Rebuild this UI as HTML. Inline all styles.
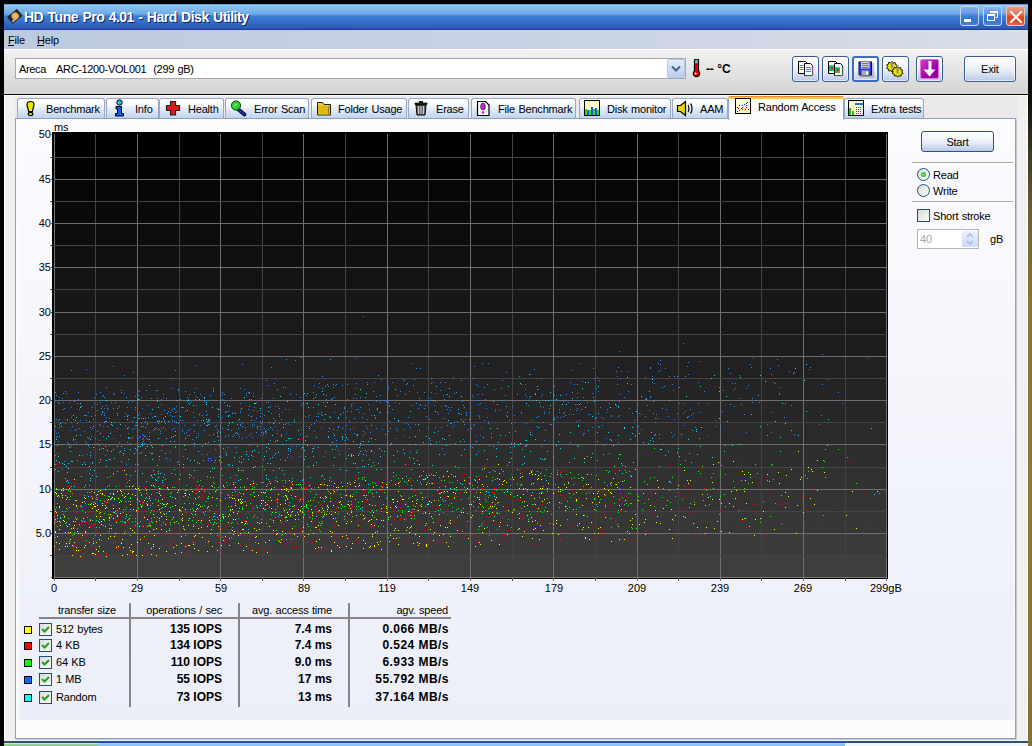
<!DOCTYPE html>
<html><head><meta charset="utf-8">
<style>
*{box-sizing:border-box}
html,body{margin:0;padding:0}
body{width:1032px;height:746px;overflow:hidden;position:relative;background:#000;font-family:"Liberation Sans",sans-serif;font-size:11px;color:#000}
.a{position:absolute}
.t{position:absolute;white-space:pre;line-height:11px;font-size:11px;letter-spacing:-0.2px;word-spacing:0.6px}
/* desktop strip */
#desk{left:1028px;top:0;width:4px;height:746px;background:linear-gradient(#000 0px,#0c0f0a 100px,#3a3420 150px,#6c5c30 210px,#8a7434 300px,#8c7838 500px,#86703a 746px)}
/* window */
#win{left:4px;top:4px;width:1024px;height:738px;background:#f0f0f0}
#title{left:4px;top:4px;width:1024px;height:26px;background:linear-gradient(#3060c0 0px,#a6d6fa 1px,#8ac4f0 2px,#7ab4ea 7px,#6ea6e6 10px,#5a96de 11px,#3a7ed2 12px,#3676cc 16px,#2e60ba 22px,#2c56b0 25px,#1c3c98 25px,#1c3c98 26px)}
#ttext{left:24px;top:10px;font-size:14px;line-height:14px;font-weight:bold;color:#fff;letter-spacing:-0.5px;word-spacing:1px;text-shadow:1px 1px 0 #0a2068}
#menu{left:4px;top:30px;width:1024px;height:19px;background:linear-gradient(90deg,#bccadf,#c8d2e4 50%,#d8dee8)}
#tool{left:4px;top:49px;width:1024px;height:45px;background:linear-gradient(#ffffff 0px,#ffffff 1px,#f2f2f2 1px,#d4d4d4 45px)}
#blk{left:4px;top:94px;width:1024px;height:1px;background:#0a0a0a}
#wht{left:4px;top:95px;width:1024px;height:1px;background:#fbfbfb}
#tabbg{left:15px;top:96px;width:1003px;height:23px;background:#ece9ed}
.tbtn{width:20px;height:20px;border:1px solid #fff;border-radius:3px}
/* combo */
#combo{left:15px;top:58px;width:671px;height:21px;border:1px solid #a7a6aa;background:#fff}
#cbtn{left:667px;top:59px;width:18px;height:19px;border:1px solid #b8c8e4;border-radius:2px;background:linear-gradient(#e4ecfa,#b8cef0)}
/* toolbar buttons */
.tb{width:27px;height:26px;border:1px solid #3c5c98;border-radius:3px;background:linear-gradient(#ffffff 0px,#f6f8fc 30%,#e4eaf6 60%,#b8c8e6 100%);box-shadow:inset 0 0 0 1px rgba(255,255,255,0.6)}
/* tabs */
.tab{top:98px;height:21px;border:1px solid #97a8c2;border-bottom:none;border-radius:3px 3px 0 0;background:linear-gradient(#ffffff 0px,#fdfeff 5px,#e6eefa 9px,#c8d9f2 17px,#bccfea 20px)}
.tabl{position:absolute;top:5px;white-space:pre;line-height:11px;font-size:11px;letter-spacing:-0.2px;word-spacing:0.6px}
/* panel */
#panel{left:15px;top:118px;width:1001px;height:621px;border:1px solid #8ca2be;background:#fbfbfe;box-shadow:1px 1px 0 #c8c8d0}
#pgrad{left:19px;top:122px;width:995px;height:598px;background:linear-gradient(#fbfbfe 0px,#f5f6fc 250px,#eceef8 598px)}
/* chart */
#chart{left:52px;top:132px;width:836px;height:447px;background:#000}
#plot{left:54px;top:134px;width:833px;height:444px;background:linear-gradient(#000 0px,#0a0a0a 90px,#1a1a1a 200px,#2c2c2c 320px,#3c3c3c 444px)}
.gv{position:absolute;top:134px;width:1px;height:444px}
.gh{position:absolute;left:54px;width:833px;height:1px}
.tk{position:absolute;height:1px;background:#555}
.yl{position:absolute;left:11px;width:40px;text-align:right;font-size:11px;line-height:11px;white-space:pre}
.xl{position:absolute;top:583px;font-size:11px;line-height:11px;white-space:pre}
.dots{position:absolute;left:0;top:0}
.btn{border:1px solid #31508c;border-radius:3px;background:linear-gradient(#ffffff 0px,#f6f8fc 30%,#e4eaf6 60%,#b8c8e6 100%)}
.radio{width:13px;height:13px;border:1px solid #1c5180;border-radius:50%;background:linear-gradient(135deg,#dcdcd6,#fafaf8)}
.cb{width:13px;height:13px;border:1px solid #1c5180;background:linear-gradient(135deg,#dcdcd6,#fafaf8)}
.tb12{position:absolute;width:100px;text-align:right;font-size:12px;line-height:12px;font-weight:bold;white-space:pre}
</style></head><body>
<div id="desk" class="a"></div>
<div id="win" class="a"></div>
<div id="title" class="a"></div>
<div id="ttext" class="a">HD Tune Pro 4.01 - Hard Disk Utility</div>

<!-- title buttons -->
<div class="a" style="left:960px;top:6px;width:19px;height:20px;border:1px solid #c2d6f6;border-radius:3px;background:linear-gradient(#86b2ee 0px,#6a9ce6 6px,#3f7cd8 9px,#3a74d4 14px,#4c88dc 20px)"></div>
<div class="a" style="left:964px;top:19px;width:7px;height:3px;background:#fff"></div>
<div class="a" style="left:983px;top:6px;width:19px;height:20px;border:1px solid #c2d6f6;border-radius:3px;background:linear-gradient(#86b2ee 0px,#6a9ce6 6px,#3f7cd8 9px,#3a74d4 14px,#4c88dc 20px)"></div>
<svg class="a" style="left:983px;top:6px" width="20" height="21"><path d="M7.5 5.5h7v6h-2" fill="none" stroke="#fff" stroke-width="1"/><path d="M7 5h8v2H7z" fill="#fff"/><rect x="4.5" y="8.5" width="7" height="6" fill="none" stroke="#fff"/><rect x="4" y="8" width="8" height="2" fill="#fff"/></svg>
<div class="a" style="left:1006px;top:6px;width:19px;height:20px;border:1px solid #f0c4b4;border-radius:3px;background:linear-gradient(#ea9a80 0px,#e27a5c 7px,#d84a24 10px,#dc4e26 15px,#e8805c 20px)"></div>
<svg class="a" style="left:1006px;top:6px" width="20" height="21"><path d="M5 6L15 16M15 6L5 16" stroke="#fff" stroke-width="2" stroke-linecap="square"/></svg>
<!-- title icon -->
<svg class="a" style="left:6px;top:8px" width="17" height="16"><g transform="rotate(-40 8.5 8)"><rect x="2" y="4" width="13" height="9" rx="1" fill="#2a2a2a"/><circle cx="9" cy="8.5" r="3.6" fill="#e8b050"/><circle cx="9" cy="8.5" r="1.2" fill="#c8c8c8"/><rect x="3" y="10" width="5" height="2" fill="#b0b0b0"/></g></svg>
<div id="menu" class="a"></div>
<div class="t" style="left:8px;top:35px">File</div>
<div class="t" style="left:37px;top:35px">Help</div>
<div class="a" style="left:8px;top:45px;width:6px;height:1px;background:#000"></div>
<div class="a" style="left:37px;top:45px;width:7px;height:1px;background:#000"></div>
<div id="tool" class="a"></div>
<div id="blk" class="a"></div>
<div id="wht" class="a"></div>
<div id="tabbg" class="a"></div>

<!-- combo -->
<div id="combo" class="a"></div>
<div class="t" style="left:19px;top:64px;letter-spacing:-0.35px;word-spacing:0.85px">Areca   ARC-1200-VOL001  (299 gB)</div>
<div id="cbtn" class="a"></div>
<svg class="a" style="left:667px;top:59px" width="18" height="19"><path d="M5 7.5l4 4 4-4" fill="none" stroke="#4d6185" stroke-width="2"/></svg>

<!-- toolbar buttons -->
<div class="a tb" style="left:792px;top:56px"></div>
<div class="a tb" style="left:822px;top:56px"></div>
<div class="a tb" style="left:852px;top:56px;border:2px solid #3c6cc8"></div>
<div class="a tb" style="left:882px;top:56px"></div>
<div class="a tb" style="left:916px;top:56px"></div>
<div class="a tb" style="left:964px;top:56px;width:52px"></div>
<div class="t" style="left:981px;top:64px">Exit</div>
<!-- icon 1 copy docs -->
<svg class="a" style="left:797px;top:60px" width="18" height="17">
 <path d="M1.5 1.5h7l2 2v10h-9z" fill="#fff" stroke="#000"/>
 <path d="M2.5 5.5h4M2.5 7.5h4M2.5 9.5h4" stroke="#1e8cff" stroke-width="1.2"/>
 <path d="M7.5 3.5h6l2 2v10h-8z" fill="#f4f4f0" stroke="#000"/>
 <path d="M9 7.5h5M9 9.5h5M9 11.5h5" stroke="#1e8cff" stroke-width="1.2"/>
 <path d="M16 6v10h-8" stroke="#b0b0b0" fill="none"/>
</svg>
<!-- icon 2 copy pics -->
<svg class="a" style="left:827px;top:60px" width="18" height="17">
 <path d="M1.5 1.5h7l2 2v10h-9z" fill="#fff" stroke="#000"/>
 <rect x="2" y="5" width="5" height="6" fill="#22c030"/><rect x="2" y="5" width="5" height="1" fill="#20d0ff"/><rect x="4" y="7" width="2" height="2" fill="#e02020"/>
 <path d="M7.5 3.5h6l2 2v10h-8z" fill="#f4f4f0" stroke="#000"/>
 <rect x="8" y="7" width="5" height="6" fill="#22c030"/><rect x="8" y="7" width="5" height="1" fill="#20d0ff"/><rect x="10" y="9" width="2" height="2" fill="#e02020"/>
 <path d="M16 6v10h-8" stroke="#b0b0b0" fill="none"/>
</svg>
<!-- icon 3 floppy -->
<svg class="a" style="left:858px;top:61px" width="16" height="16">
 <path d="M0.5 0.5h13.5v14h-12.5l-1-1z" fill="#101010"/>
 <rect x="1.5" y="1.5" width="11.5" height="12" fill="#2a3ef0"/>
 <rect x="3" y="1" width="8.5" height="6.5" fill="#d0d0d0"/>
 <path d="M4 2.5h6.5M4 4.5h6.5M4 6.5h6.5" stroke="#7a7a7a" stroke-width="1"/>
 <rect x="3.5" y="9.5" width="7.5" height="4.5" fill="#a8a8a8"/><rect x="8" y="10.5" width="2" height="3" fill="#fff"/>
 <path d="M15 2v13.5h-13" stroke="#9a9a9a" fill="none"/>
</svg>
<!-- icon 4 gears -->
<svg class="a" style="left:886px;top:60px" width="19" height="18">
 <g fill="#e8e000" stroke="#202000" stroke-width="1">
 <path d="M6 1.5l1.2 1.6 1.9-0.6 0.3 2 1.9 0.7-0.9 1.8 1.2 1.6-1.9 0.7-0.3 2-1.9-0.6-1.5 1.4-1.2-1.6-1.9 0.6-0.3-2-1.9-0.7 0.9-1.8-1.2-1.6 1.9-0.7 0.3-2 1.9 0.6z"/>
 <path d="M11.5 6.5l1.2 1.6 1.9-0.6 0.3 2 1.9 0.7-0.9 1.8 1.2 1.6-1.9 0.7-0.3 2-1.9-0.6-1.5 1.4-1.2-1.6-1.9 0.6-0.3-2-1.9-0.7 0.9-1.8-1.2-1.6 1.9-0.7 0.3-2 1.9 0.6z"/>
 </g>
 <rect x="5" y="1" width="2" height="7" fill="#8a8a8a"/><rect x="10.5" y="5" width="2" height="8" fill="#8a8a8a"/>
</svg>
<!-- icon 5 down arrow -->
<div class="a" style="left:920px;top:59px;width:19px;height:20px;border-radius:2px;border:1px solid #e070e0;background:linear-gradient(135deg,#d040d0,#a000a8 60%,#880090)"></div>
<svg class="a" style="left:920px;top:59px" width="19" height="20"><path d="M8.5 2h3v9h-3z" fill="#fff"/><path d="M3.5 10.5h12l-6 7z" fill="#fff"/></svg>
<!-- thermometer -->
<svg class="a" style="left:692px;top:59px" width="10" height="19">
 <path d="M2.5 1.5a2 2 0 0 1 4 0v10.5a3.2 3.2 0 1 1 -4 0z" fill="#e00000" stroke="#000" stroke-width="1.2"/>
 <rect x="3.1" y="1.2" width="2.8" height="3" fill="#30d0e8"/>
 <circle cx="3.6" cy="14.6" r="1" fill="#fff"/>
</svg>
<div class="t" style="left:706px;top:63px;font-weight:bold;font-size:12px;line-height:12px">-- °C</div>
<!-- tabs -->
<div class="a tab" style="left:17px;width:88px"><span class="tabl" style="left:28px">Benchmark</span></div>
<div class="a tab" style="left:106px;width:53px"><span class="tabl" style="left:28px">Info</span></div>
<div class="a tab" style="left:159px;width:65px"><span class="tabl" style="left:28px">Health</span></div>
<div class="a tab" style="left:225px;width:84px"><span class="tabl" style="left:28px">Error Scan</span></div>
<div class="a tab" style="left:311px;width:96px"><span class="tabl" style="left:26px">Folder Usage</span></div>
<div class="a tab" style="left:408px;width:61px"><span class="tabl" style="left:27px">Erase</span></div>
<div class="a tab" style="left:471px;width:105px"><span class="tabl" style="left:26px">File Benchmark</span></div>
<div class="a tab" style="left:579px;width:92px"><span class="tabl" style="left:27px">Disk monitor</span></div>
<div class="a tab" style="left:672px;width:56px"><span class="tabl" style="left:27px">AAM</span></div>
<div class="a tab" style="left:844px;width:80px"><span class="tabl" style="left:26px">Extra tests</span></div>
<!-- tab icons -->
<svg class="a" style="left:26px;top:100px" width="10" height="17"><path d="M4.5 1.5c2 0 3.5 1 3.5 3 0 2-1.3 4.5-1.6 7h-3.8c-0.3-2.5-1.6-5-1.6-7 0-2 1.5-3 3.5-3z" fill="#e8e800" stroke="#000" stroke-width="1.2"/><ellipse cx="4.5" cy="14" rx="2.3" ry="1.6" fill="#e8e800" stroke="#000" stroke-width="1.2"/></svg>
<svg class="a" style="left:114px;top:99px" width="12" height="18"><circle cx="5.5" cy="3.5" r="2.7" fill="#30b4ff" stroke="#000" stroke-width="1"/><path d="M2 7.5h5.5v7h2v2.5h-8v-2.5h2v-4.5h-1.5z" fill="#0a5cf0" stroke="#000" stroke-width="1"/></svg>
<svg class="a" style="left:165px;top:100px" width="17" height="17"><path d="M5.5 1.5h5v4h4v5h-4v4.5h-5v-4.5h-4v-5h4z" fill="#e01818" stroke="#202020" stroke-width="1.2"/></svg>
<svg class="a" style="left:230px;top:100px" width="18" height="17"><path d="M8.5 9.5l6 5" stroke="#000" stroke-width="3.6" stroke-linecap="round"/><path d="M8.5 9.5l6 5" stroke="#2030c0" stroke-width="2" stroke-linecap="round"/><circle cx="6" cy="5.5" r="4.6" fill="#30d030" stroke="#104010" stroke-width="1"/><path d="M4 6.5l3-3" stroke="#c0ffc0" stroke-width="1"/></svg>
<svg class="a" style="left:316px;top:100px" width="16" height="17"><path d="M1.5 2.5h5l1.5 2h6.5v10.5h-13z" fill="#f0d040" stroke="#202000" stroke-width="1"/><path d="M2 5.5h12v9h-12z" fill="#e0b818"/><path d="M12.5 6v8.5" stroke="#a08000"/></svg>
<svg class="a" style="left:414px;top:100px" width="14" height="17"><path d="M1 3h12v1.5h-12z" fill="#303030" stroke="#000" stroke-width="0.8"/><path d="M2 5h10l-1 10h-8z" fill="#6a6a6a" stroke="#000" stroke-width="1"/><path d="M4.5 6v8M7 6v8M9.5 6v8" stroke="#d0d0d0" stroke-width="1"/><rect x="5" y="1" width="4" height="2" fill="#202020"/></svg>
<svg class="a" style="left:476px;top:100px" width="15" height="17"><path d="M1.5 1.5h8l3.5 3.5v10.5h-11.5z" fill="#fafaf0" stroke="#000" stroke-width="1.2"/><ellipse cx="7" cy="6.5" rx="2.3" ry="3.5" fill="#d020e0" stroke="#303030" stroke-width="0.8"/><circle cx="7" cy="12.5" r="1.3" fill="#d020e0"/></svg>
<svg class="a" style="left:584px;top:100px" width="16" height="16"><rect x="0.5" y="0.5" width="15" height="15" fill="#fcfcc8" stroke="#000"/><path d="M1 9h2v6h-2zM5 10h2v5h-2zM9 9h2v6h-2zM13 10h2v5h-2z" fill="#20e020"/><path d="M3 10h2v5h-2zM7 7h2v8h-2zM11 8h2v7h-2z" fill="#3050e0"/></svg>
<svg class="a" style="left:676px;top:100px" width="18" height="17"><path d="M1.5 5.5h3l5-4v14l-5-4h-3z" fill="#e8d800" stroke="#000" stroke-width="1.2"/><path d="M12 5c1.2 1 1.2 6 0 7M14.5 3.5c2 2 2 8 0 10" fill="none" stroke="#000" stroke-width="1.2"/></svg>

<svg class="a" style="left:848px;top:100px" width="17" height="17"><rect x="0.5" y="0.5" width="15" height="15" fill="#fcfcc8" stroke="#000"/><path d="M1 8h2v7h-2zM4 11h2v4h-2z" fill="#20c020"/><rect x="7" y="6" width="8" height="9" fill="#fff"/><path d="M8 7h1v1h-1zM10 7h1v1h-1zM12 7h1v1h-1zM8 9h1v1h-1zM10 9h1v1h-1zM12 9h1v1h-1zM8 11h1v1h-1zM10 11h1v1h-1zM12 11h1v1h-1zM8 13h1v1h-1zM10 13h1v1h-1zM12 13h1v1h-1z" fill="#e02020"/><rect x="7" y="3" width="8" height="2" fill="#3070e0"/></svg>

<!-- panel -->
<div id="panel" class="a"></div>
<div id="pgrad" class="a"></div>

<!-- selected tab -->
<div class="a" style="left:728px;top:96px;width:116px;height:24px;border:1px solid #97a8c2;border-bottom:none;border-top:none;border-radius:3px 3px 0 0;background:#fbfbfe"></div>
<div class="a" style="left:728px;top:96px;width:116px;height:3px;border-radius:3px 3px 0 0;background:linear-gradient(#e68b2c 0px,#e68b2c 1px,#ffc73c 1px)"></div>
<div class="t" style="left:758px;top:102px">Random Access</div>
<svg class="a" style="left:735px;top:98px" width="17" height="17"><defs><linearGradient id="ig" x1="0" y1="0" x2="1" y2="1"><stop offset="0" stop-color="#ffffff"/><stop offset="1" stop-color="#f8f0a0"/></linearGradient></defs><rect x="0.5" y="0.5" width="15" height="15" fill="url(#ig)" stroke="#000"/><path fill="#f00000" d="M2 13h1v1h-1zM3 10h1v1h-1zM7 11h1v1h-1zM7 9h1v1h-1zM10 11h1v1h-1zM11 9h1v1h-1zM13 11h1v1h-1zM4 12h1v1h-1z"/><path fill="#0020ff" d="M2 9h1v1h-1zM4 7h1v1h-1zM6 10h1v1h-1zM7 7h1v1h-1zM9 6h1v1h-1zM11 5h1v1h-1zM11 7h1v1h-1zM12 4h1v1h-1z"/></svg>

<!-- chart -->
<div id="chart" class="a"></div>
<div id="plot" class="a"></div>
<div class="a" style="left:52px;top:578px;width:836px;height:1px;background:#000"></div>
<div class="a" style="left:54px;top:555px;width:833px;height:23px;background:rgb(62,62,62)"></div>
<div class="a" style="left:54px;top:533px;width:833px;height:23px;background:rgb(59,59,59)"></div>
<div class="a" style="left:54px;top:511px;width:833px;height:23px;background:rgb(55,55,55)"></div>
<div class="a" style="left:54px;top:489px;width:833px;height:23px;background:rgb(52,52,52)"></div>
<div class="a" style="left:54px;top:467px;width:833px;height:23px;background:rgb(49,49,49)"></div>
<div class="a" style="left:54px;top:444px;width:833px;height:24px;background:rgb(46,46,46)"></div>
<div class="a" style="left:54px;top:422px;width:833px;height:23px;background:rgb(42,42,42)"></div>
<div class="a" style="left:54px;top:400px;width:833px;height:23px;background:rgb(39,39,39)"></div>
<div class="a" style="left:54px;top:378px;width:833px;height:23px;background:rgb(36,36,36)"></div>
<div class="a" style="left:54px;top:356px;width:833px;height:23px;background:rgb(33,33,33)"></div>
<div class="a" style="left:54px;top:334px;width:833px;height:23px;background:rgb(29,29,29)"></div>
<div class="a" style="left:54px;top:312px;width:833px;height:23px;background:rgb(26,26,26)"></div>
<div class="a" style="left:54px;top:289px;width:833px;height:24px;background:rgb(23,23,23)"></div>
<div class="a" style="left:54px;top:267px;width:833px;height:23px;background:rgb(20,20,20)"></div>
<div class="a" style="left:54px;top:245px;width:833px;height:23px;background:rgb(16,16,16)"></div>
<div class="a" style="left:54px;top:223px;width:833px;height:23px;background:rgb(13,13,13)"></div>
<div class="a" style="left:54px;top:201px;width:833px;height:23px;background:rgb(10,10,10)"></div>
<div class="a" style="left:54px;top:179px;width:833px;height:23px;background:rgb(7,7,7)"></div>
<div class="a" style="left:54px;top:157px;width:833px;height:23px;background:rgb(3,3,3)"></div>
<div class="a" style="left:54px;top:134px;width:833px;height:24px;background:rgb(0,0,0)"></div>
<div class="gv" style="left:54px;background:#6e6e6e"></div>
<div class="gv" style="left:95px;background:#424242"></div>
<div class="gv" style="left:137px;background:#6e6e6e"></div>
<div class="gv" style="left:179px;background:#424242"></div>
<div class="gv" style="left:220px;background:#6e6e6e"></div>
<div class="gv" style="left:262px;background:#424242"></div>
<div class="gv" style="left:303px;background:#6e6e6e"></div>
<div class="gv" style="left:345px;background:#424242"></div>
<div class="gv" style="left:387px;background:#6e6e6e"></div>
<div class="gv" style="left:428px;background:#424242"></div>
<div class="gv" style="left:470px;background:#6e6e6e"></div>
<div class="gv" style="left:512px;background:#424242"></div>
<div class="gv" style="left:553px;background:#6e6e6e"></div>
<div class="gv" style="left:595px;background:#424242"></div>
<div class="gv" style="left:637px;background:#6e6e6e"></div>
<div class="gv" style="left:678px;background:#424242"></div>
<div class="gv" style="left:720px;background:#6e6e6e"></div>
<div class="gv" style="left:761px;background:#424242"></div>
<div class="gv" style="left:803px;background:#6e6e6e"></div>
<div class="gv" style="left:845px;background:#424242"></div>
<div class="gv" style="left:886px;background:#6e6e6e"></div>
<div class="gh" style="top:577px;background:#787878"></div>
<div class="gh" style="top:555px;background:#444444"></div>
<div class="gh" style="top:533px;background:#6e6e6e"></div>
<div class="gh" style="top:511px;background:#444444"></div>
<div class="gh" style="top:489px;background:#6e6e6e"></div>
<div class="gh" style="top:467px;background:#444444"></div>
<div class="gh" style="top:444px;background:#6e6e6e"></div>
<div class="gh" style="top:422px;background:#444444"></div>
<div class="gh" style="top:400px;background:#6e6e6e"></div>
<div class="gh" style="top:378px;background:#444444"></div>
<div class="gh" style="top:356px;background:#6e6e6e"></div>
<div class="gh" style="top:334px;background:#444444"></div>
<div class="gh" style="top:312px;background:#6e6e6e"></div>
<div class="gh" style="top:289px;background:#444444"></div>
<div class="gh" style="top:267px;background:#6e6e6e"></div>
<div class="gh" style="top:245px;background:#444444"></div>
<div class="gh" style="top:223px;background:#6e6e6e"></div>
<div class="gh" style="top:201px;background:#444444"></div>
<div class="gh" style="top:179px;background:#6e6e6e"></div>
<div class="gh" style="top:157px;background:#444444"></div>
<div class="a" style="left:54px;top:578px;width:1px;height:3px;background:#707070"></div>
<div class="a" style="left:95px;top:578px;width:1px;height:3px;background:#555"></div>
<div class="a" style="left:137px;top:578px;width:1px;height:3px;background:#707070"></div>
<div class="a" style="left:179px;top:578px;width:1px;height:3px;background:#555"></div>
<div class="a" style="left:220px;top:578px;width:1px;height:3px;background:#707070"></div>
<div class="a" style="left:262px;top:578px;width:1px;height:3px;background:#555"></div>
<div class="a" style="left:303px;top:578px;width:1px;height:3px;background:#707070"></div>
<div class="a" style="left:345px;top:578px;width:1px;height:3px;background:#555"></div>
<div class="a" style="left:387px;top:578px;width:1px;height:3px;background:#707070"></div>
<div class="a" style="left:428px;top:578px;width:1px;height:3px;background:#555"></div>
<div class="a" style="left:470px;top:578px;width:1px;height:3px;background:#707070"></div>
<div class="a" style="left:512px;top:578px;width:1px;height:3px;background:#555"></div>
<div class="a" style="left:553px;top:578px;width:1px;height:3px;background:#707070"></div>
<div class="a" style="left:595px;top:578px;width:1px;height:3px;background:#555"></div>
<div class="a" style="left:637px;top:578px;width:1px;height:3px;background:#707070"></div>
<div class="a" style="left:678px;top:578px;width:1px;height:3px;background:#555"></div>
<div class="a" style="left:720px;top:578px;width:1px;height:3px;background:#707070"></div>
<div class="a" style="left:761px;top:578px;width:1px;height:3px;background:#555"></div>
<div class="a" style="left:803px;top:578px;width:1px;height:3px;background:#707070"></div>
<div class="a" style="left:845px;top:578px;width:1px;height:3px;background:#555"></div>
<div class="a" style="left:886px;top:578px;width:1px;height:3px;background:#707070"></div>
<div class="tk" style="top:577px;left:51px;width:3px"></div>
<div class="tk" style="top:555px;left:50px;width:4px"></div>
<div class="tk" style="top:533px;left:51px;width:3px"></div>
<div class="tk" style="top:511px;left:50px;width:4px"></div>
<div class="tk" style="top:489px;left:51px;width:3px"></div>
<div class="tk" style="top:467px;left:50px;width:4px"></div>
<div class="tk" style="top:444px;left:51px;width:3px"></div>
<div class="tk" style="top:422px;left:50px;width:4px"></div>
<div class="tk" style="top:400px;left:51px;width:3px"></div>
<div class="tk" style="top:378px;left:50px;width:4px"></div>
<div class="tk" style="top:356px;left:51px;width:3px"></div>
<div class="tk" style="top:334px;left:50px;width:4px"></div>
<div class="tk" style="top:312px;left:51px;width:3px"></div>
<div class="tk" style="top:289px;left:50px;width:4px"></div>
<div class="tk" style="top:267px;left:51px;width:3px"></div>
<div class="tk" style="top:245px;left:50px;width:4px"></div>
<div class="tk" style="top:223px;left:51px;width:3px"></div>
<div class="tk" style="top:201px;left:50px;width:4px"></div>
<div class="tk" style="top:179px;left:51px;width:3px"></div>
<div class="tk" style="top:157px;left:50px;width:4px"></div>
<div class="tk" style="top:134px;left:51px;width:3px"></div>
<svg class="dots" width="1032" height="746" shape-rendering="crispEdges"><path fill="#00e8ff" d="M436 386h1v1h-1zM572 398h1v1h-1zM66 522h1v1h-1zM711 378h1v1h-1zM252 451h1v1h-1zM493 446h1v1h-1zM483 437h1v1h-1zM199 399h1v1h-1zM69 447h1v1h-1zM190 460h1v1h-1zM825 449h1v1h-1zM165 416h1v1h-1zM155 479h1v1h-1zM727 421h1v1h-1zM740 377h1v1h-1zM315 397h1v1h-1zM525 446h1v1h-1zM166 513h1v1h-1zM155 428h1v1h-1zM136 422h1v1h-1zM732 445h1v1h-1zM785 423h1v1h-1zM130 475h1v1h-1zM394 461h1v1h-1zM255 403h1v1h-1zM160 473h1v1h-1zM668 451h1v1h-1zM453 476h1v1h-1zM428 504h1v1h-1zM269 448h1v1h-1zM184 503h1v1h-1zM157 401h1v1h-1zM603 454h1v1h-1zM425 479h1v1h-1zM232 465h1v1h-1zM217 436h1v1h-1zM366 393h1v1h-1zM358 455h1v1h-1zM539 493h1v1h-1zM346 437h1v1h-1zM545 458h1v1h-1zM316 437h1v1h-1zM522 464h1v1h-1zM341 508h1v1h-1zM501 469h1v1h-1zM110 433h1v1h-1zM90 455h1v1h-1zM574 458h1v1h-1zM209 420h1v1h-1zM649 391h1v1h-1zM598 413h1v1h-1zM137 449h1v1h-1zM65 495h1v1h-1zM651 432h1v1h-1zM302 447h1v1h-1zM874 494h1v1h-1zM507 412h1v1h-1zM227 405h1v1h-1zM461 419h1v1h-1zM446 445h1v1h-1zM610 439h1v1h-1zM660 449h1v1h-1zM134 417h1v1h-1zM198 451h1v1h-1zM177 462h1v1h-1zM520 473h1v1h-1zM65 478h1v1h-1zM74 486h1v1h-1zM230 477h1v1h-1zM203 420h1v1h-1zM307 403h1v1h-1zM449 435h1v1h-1zM560 474h1v1h-1zM82 464h1v1h-1zM214 441h1v1h-1zM210 471h1v1h-1zM152 477h1v1h-1zM714 375h1v1h-1zM159 421h1v1h-1zM152 409h1v1h-1zM553 505h1v1h-1zM318 447h1v1h-1zM90 452h1v1h-1zM304 459h1v1h-1zM120 424h1v1h-1zM558 491h1v1h-1zM283 508h1v1h-1zM88 496h1v1h-1zM228 495h1v1h-1zM538 427h1v1h-1zM57 445h1v1h-1zM141 495h1v1h-1zM89 466h1v1h-1zM175 435h1v1h-1zM275 453h1v1h-1zM479 503h1v1h-1zM68 482h1v1h-1zM401 496h1v1h-1zM305 456h1v1h-1zM193 405h1v1h-1zM229 406h1v1h-1zM483 486h1v1h-1zM530 451h1v1h-1zM413 458h1v1h-1zM409 511h1v1h-1zM68 468h1v1h-1zM546 469h1v1h-1zM292 478h1v1h-1zM254 403h1v1h-1zM444 439h1v1h-1zM149 496h1v1h-1zM436 442h1v1h-1zM111 422h1v1h-1zM566 404h1v1h-1zM661 449h1v1h-1zM530 434h1v1h-1zM205 443h1v1h-1zM558 441h1v1h-1zM584 462h1v1h-1zM520 443h1v1h-1zM266 447h1v1h-1zM184 445h1v1h-1zM191 475h1v1h-1zM330 417h1v1h-1zM449 388h1v1h-1zM371 438h1v1h-1zM353 455h1v1h-1zM226 453h1v1h-1zM506 406h1v1h-1zM111 451h1v1h-1zM511 458h1v1h-1zM287 401h1v1h-1zM597 460h1v1h-1zM268 411h1v1h-1zM411 485h1v1h-1zM338 507h1v1h-1zM758 395h1v1h-1zM138 399h1v1h-1zM288 438h1v1h-1zM90 478h1v1h-1zM260 408h1v1h-1zM478 507h1v1h-1zM199 463h1v1h-1zM89 473h1v1h-1zM173 436h1v1h-1zM627 383h1v1h-1zM394 418h1v1h-1zM165 479h1v1h-1zM374 415h1v1h-1zM719 418h1v1h-1zM152 447h1v1h-1zM322 475h1v1h-1zM318 404h1v1h-1zM363 441h1v1h-1zM336 446h1v1h-1zM630 475h1v1h-1zM515 431h1v1h-1zM124 522h1v1h-1zM514 446h1v1h-1zM129 480h1v1h-1zM827 445h1v1h-1zM701 427h1v1h-1zM184 493h1v1h-1zM385 434h1v1h-1zM307 445h1v1h-1zM60 423h1v1h-1zM760 426h1v1h-1zM92 462h1v1h-1zM321 476h1v1h-1zM518 444h1v1h-1zM740 444h1v1h-1zM159 491h1v1h-1zM238 480h1v1h-1zM493 401h1v1h-1zM550 392h1v1h-1zM439 454h1v1h-1zM566 474h1v1h-1zM460 441h1v1h-1zM59 462h1v1h-1zM147 446h1v1h-1zM328 437h1v1h-1zM106 400h1v1h-1zM265 509h1v1h-1zM520 383h1v1h-1zM267 463h1v1h-1zM359 447h1v1h-1zM596 504h1v1h-1zM633 462h1v1h-1zM497 428h1v1h-1zM219 460h1v1h-1zM532 492h1v1h-1zM208 421h1v1h-1zM56 439h1v1h-1zM266 486h1v1h-1zM199 414h1v1h-1zM357 467h1v1h-1zM228 435h1v1h-1zM239 508h1v1h-1zM316 462h1v1h-1zM636 411h1v1h-1zM138 446h1v1h-1zM141 426h1v1h-1zM161 421h1v1h-1zM560 448h1v1h-1zM327 402h1v1h-1zM260 505h1v1h-1zM223 518h1v1h-1zM308 407h1v1h-1zM55 469h1v1h-1zM76 435h1v1h-1zM273 470h1v1h-1zM470 446h1v1h-1zM726 396h1v1h-1zM490 428h1v1h-1zM172 497h1v1h-1zM578 426h1v1h-1zM496 456h1v1h-1zM110 493h1v1h-1zM58 456h1v1h-1zM712 457h1v1h-1zM483 507h1v1h-1zM324 501h1v1h-1zM678 448h1v1h-1zM415 495h1v1h-1zM393 472h1v1h-1zM313 448h1v1h-1zM225 412h1v1h-1zM243 470h1v1h-1zM177 400h1v1h-1zM197 481h1v1h-1zM305 440h1v1h-1zM358 486h1v1h-1zM159 456h1v1h-1zM163 484h1v1h-1zM269 481h1v1h-1zM270 463h1v1h-1zM353 441h1v1h-1zM56 507h1v1h-1zM225 516h1v1h-1zM470 459h1v1h-1zM368 441h1v1h-1zM117 471h1v1h-1zM220 402h1v1h-1zM270 427h1v1h-1zM371 425h1v1h-1zM167 413h1v1h-1zM679 456h1v1h-1zM255 466h1v1h-1zM127 419h1v1h-1zM76 417h1v1h-1zM121 461h1v1h-1zM494 496h1v1h-1zM406 476h1v1h-1zM686 396h1v1h-1zM246 451h1v1h-1zM461 396h1v1h-1zM719 391h1v1h-1zM351 455h1v1h-1zM310 477h1v1h-1zM197 462h1v1h-1zM495 471h1v1h-1zM288 448h1v1h-1zM58 471h1v1h-1zM386 498h1v1h-1zM84 462h1v1h-1zM109 459h1v1h-1zM360 508h1v1h-1zM279 514h1v1h-1zM229 465h1v1h-1zM713 488h1v1h-1zM268 479h1v1h-1zM190 402h1v1h-1zM179 479h1v1h-1zM96 476h1v1h-1zM168 421h1v1h-1zM445 405h1v1h-1zM377 444h1v1h-1zM806 411h1v1h-1zM141 452h1v1h-1zM209 520h1v1h-1zM562 404h1v1h-1zM94 470h1v1h-1zM650 440h1v1h-1zM135 471h1v1h-1zM154 474h1v1h-1zM157 421h1v1h-1zM152 459h1v1h-1zM63 514h1v1h-1zM147 501h1v1h-1zM560 395h1v1h-1zM149 439h1v1h-1zM143 418h1v1h-1zM537 386h1v1h-1zM360 389h1v1h-1zM585 407h1v1h-1zM71 461h1v1h-1zM577 445h1v1h-1zM497 404h1v1h-1zM349 482h1v1h-1zM113 449h1v1h-1zM618 435h1v1h-1zM187 410h1v1h-1zM540 458h1v1h-1zM80 403h1v1h-1zM444 454h1v1h-1zM56 460h1v1h-1zM477 482h1v1h-1zM127 416h1v1h-1zM84 501h1v1h-1zM91 503h1v1h-1zM191 489h1v1h-1zM127 428h1v1h-1zM174 441h1v1h-1zM107 500h1v1h-1zM782 403h1v1h-1zM330 477h1v1h-1zM117 446h1v1h-1zM463 421h1v1h-1zM325 414h1v1h-1zM283 427h1v1h-1zM185 438h1v1h-1zM276 477h1v1h-1zM700 386h1v1h-1zM455 466h1v1h-1zM632 427h1v1h-1zM526 403h1v1h-1zM373 462h1v1h-1zM185 449h1v1h-1zM670 482h1v1h-1zM266 478h1v1h-1zM461 510h1v1h-1zM351 456h1v1h-1zM269 422h1v1h-1zM482 469h1v1h-1zM98 521h1v1h-1zM377 409h1v1h-1zM325 406h1v1h-1zM598 426h1v1h-1zM356 509h1v1h-1zM582 388h1v1h-1zM185 490h1v1h-1zM202 446h1v1h-1zM703 500h1v1h-1zM105 446h1v1h-1zM352 496h1v1h-1zM578 425h1v1h-1zM284 474h1v1h-1zM176 422h1v1h-1zM103 448h1v1h-1zM92 475h1v1h-1zM416 452h1v1h-1zM212 468h1v1h-1zM653 401h1v1h-1zM414 463h1v1h-1zM610 407h1v1h-1zM433 400h1v1h-1zM411 469h1v1h-1zM207 425h1v1h-1zM258 452h1v1h-1zM535 394h1v1h-1zM410 411h1v1h-1zM130 509h1v1h-1zM585 382h1v1h-1zM364 466h1v1h-1zM228 416h1v1h-1zM751 414h1v1h-1zM569 462h1v1h-1zM509 432h1v1h-1zM298 444h1v1h-1zM228 425h1v1h-1zM120 451h1v1h-1zM223 448h1v1h-1zM247 478h1v1h-1zM148 508h1v1h-1zM517 469h1v1h-1zM342 437h1v1h-1zM220 432h1v1h-1zM524 463h1v1h-1zM488 492h1v1h-1zM767 480h1v1h-1zM234 457h1v1h-1zM236 452h1v1h-1zM622 473h1v1h-1zM780 437h1v1h-1zM135 448h1v1h-1zM241 408h1v1h-1zM395 389h1v1h-1zM476 454h1v1h-1zM627 377h1v1h-1zM348 455h1v1h-1zM206 419h1v1h-1zM767 435h1v1h-1zM380 456h1v1h-1zM641 396h1v1h-1zM64 464h1v1h-1zM107 450h1v1h-1zM484 450h1v1h-1zM199 504h1v1h-1zM248 459h1v1h-1zM592 453h1v1h-1zM206 404h1v1h-1zM106 466h1v1h-1zM285 460h1v1h-1zM194 470h1v1h-1zM85 485h1v1h-1zM687 417h1v1h-1zM157 465h1v1h-1zM342 436h1v1h-1zM755 464h1v1h-1zM524 456h1v1h-1zM237 424h1v1h-1zM741 480h1v1h-1zM579 404h1v1h-1zM170 441h1v1h-1zM648 443h1v1h-1zM677 452h1v1h-1zM544 459h1v1h-1zM277 440h1v1h-1zM578 446h1v1h-1zM611 482h1v1h-1zM114 512h1v1h-1zM787 489h1v1h-1zM387 467h1v1h-1zM271 493h1v1h-1zM60 517h1v1h-1zM442 438h1v1h-1zM81 406h1v1h-1zM363 495h1v1h-1zM620 454h1v1h-1zM142 444h1v1h-1zM618 406h1v1h-1zM492 480h1v1h-1zM336 446h1v1h-1zM522 449h1v1h-1zM66 481h1v1h-1zM793 373h1v1h-1zM316 494h1v1h-1zM312 451h1v1h-1zM760 375h1v1h-1zM106 460h1v1h-1zM384 451h1v1h-1zM282 444h1v1h-1zM109 485h1v1h-1zM265 431h1v1h-1zM156 480h1v1h-1zM140 521h1v1h-1zM595 418h1v1h-1zM93 447h1v1h-1zM681 434h1v1h-1zM175 431h1v1h-1zM450 488h1v1h-1zM105 421h1v1h-1zM545 400h1v1h-1zM285 480h1v1h-1zM652 438h1v1h-1zM535 439h1v1h-1zM153 470h1v1h-1zM462 484h1v1h-1zM362 510h1v1h-1zM174 469h1v1h-1zM691 462h1v1h-1zM221 462h1v1h-1zM164 474h1v1h-1zM624 428h1v1h-1zM298 430h1v1h-1zM510 452h1v1h-1zM546 480h1v1h-1zM203 460h1v1h-1zM121 446h1v1h-1zM710 496h1v1h-1zM171 437h1v1h-1zM89 421h1v1h-1zM689 453h1v1h-1zM183 464h1v1h-1zM268 407h1v1h-1zM218 409h1v1h-1zM62 511h1v1h-1zM461 455h1v1h-1zM333 465h1v1h-1zM158 407h1v1h-1zM376 492h1v1h-1zM597 441h1v1h-1zM212 407h1v1h-1zM608 432h1v1h-1zM128 459h1v1h-1zM498 442h1v1h-1zM775 421h1v1h-1zM151 510h1v1h-1zM228 464h1v1h-1zM409 457h1v1h-1zM73 439h1v1h-1zM303 479h1v1h-1zM146 481h1v1h-1zM452 511h1v1h-1zM204 397h1v1h-1zM700 446h1v1h-1zM556 445h1v1h-1zM369 459h1v1h-1zM371 450h1v1h-1zM67 472h1v1h-1zM667 500h1v1h-1zM765 381h1v1h-1zM699 438h1v1h-1zM203 512h1v1h-1zM613 445h1v1h-1zM158 477h1v1h-1zM257 446h1v1h-1zM90 469h1v1h-1zM491 437h1v1h-1zM163 477h1v1h-1zM166 458h1v1h-1zM244 397h1v1h-1zM65 423h1v1h-1zM404 453h1v1h-1zM463 508h1v1h-1zM241 462h1v1h-1zM391 443h1v1h-1zM485 510h1v1h-1zM214 516h1v1h-1zM275 441h1v1h-1zM70 451h1v1h-1zM139 486h1v1h-1zM724 451h1v1h-1zM155 416h1v1h-1zM162 445h1v1h-1zM226 455h1v1h-1zM548 400h1v1h-1zM316 516h1v1h-1zM458 409h1v1h-1zM140 446h1v1h-1zM239 419h1v1h-1zM158 473h1v1h-1zM417 460h1v1h-1zM302 480h1v1h-1zM652 379h1v1h-1zM171 473h1v1h-1zM368 464h1v1h-1zM104 413h1v1h-1zM68 463h1v1h-1zM489 472h1v1h-1zM84 521h1v1h-1zM151 445h1v1h-1zM102 412h1v1h-1zM338 417h1v1h-1zM361 441h1v1h-1zM278 452h1v1h-1zM397 451h1v1h-1zM542 459h1v1h-1zM334 457h1v1h-1zM279 414h1v1h-1zM123 453h1v1h-1zM594 401h1v1h-1zM432 465h1v1h-1zM99 513h1v1h-1zM298 439h1v1h-1zM241 470h1v1h-1zM113 473h1v1h-1zM165 453h1v1h-1zM403 449h1v1h-1zM170 496h1v1h-1zM688 416h1v1h-1zM322 391h1v1h-1zM570 432h1v1h-1zM409 444h1v1h-1zM496 448h1v1h-1zM349 505h1v1h-1zM828 419h1v1h-1zM460 483h1v1h-1zM451 407h1v1h-1zM449 396h1v1h-1zM332 449h1v1h-1zM371 451h1v1h-1zM82 521h1v1h-1zM404 481h1v1h-1zM653 441h1v1h-1zM357 435h1v1h-1zM669 400h1v1h-1zM287 499h1v1h-1zM355 463h1v1h-1zM588 382h1v1h-1zM371 466h1v1h-1zM426 475h1v1h-1zM351 454h1v1h-1zM324 419h1v1h-1zM366 495h1v1h-1zM61 426h1v1h-1zM550 405h1v1h-1zM164 474h1v1h-1zM85 464h1v1h-1zM294 421h1v1h-1zM611 440h1v1h-1zM655 434h1v1h-1zM108 436h1v1h-1zM394 461h1v1h-1zM539 402h1v1h-1zM304 393h1v1h-1zM340 469h1v1h-1zM210 458h1v1h-1zM697 454h1v1h-1zM238 468h1v1h-1zM434 432h1v1h-1zM130 449h1v1h-1zM304 450h1v1h-1zM272 435h1v1h-1zM464 449h1v1h-1zM696 431h1v1h-1zM500 435h1v1h-1zM264 456h1v1h-1zM67 480h1v1h-1zM100 459h1v1h-1zM236 475h1v1h-1zM503 471h1v1h-1zM493 470h1v1h-1zM179 464h1v1h-1zM190 509h1v1h-1zM114 458h1v1h-1zM795 368h1v1h-1zM417 499h1v1h-1zM266 475h1v1h-1zM142 445h1v1h-1zM278 516h1v1h-1zM290 438h1v1h-1zM598 386h1v1h-1zM215 460h1v1h-1zM142 443h1v1h-1zM206 402h1v1h-1zM73 415h1v1h-1zM158 438h1v1h-1zM194 443h1v1h-1zM286 440h1v1h-1zM90 439h1v1h-1zM588 430h1v1h-1zM425 478h1v1h-1zM559 507h1v1h-1zM151 453h1v1h-1zM625 466h1v1h-1zM632 433h1v1h-1zM358 472h1v1h-1zM448 420h1v1h-1zM219 456h1v1h-1zM208 498h1v1h-1zM257 517h1v1h-1zM451 474h1v1h-1zM142 473h1v1h-1zM429 438h1v1h-1zM685 460h1v1h-1zM318 413h1v1h-1zM526 440h1v1h-1zM162 482h1v1h-1zM152 453h1v1h-1zM204 514h1v1h-1zM344 516h1v1h-1zM134 453h1v1h-1zM180 416h1v1h-1zM257 426h1v1h-1zM435 411h1v1h-1zM487 459h1v1h-1zM93 426h1v1h-1zM622 465h1v1h-1zM187 458h1v1h-1zM368 484h1v1h-1zM688 439h1v1h-1zM757 473h1v1h-1zM547 451h1v1h-1zM126 516h1v1h-1zM241 456h1v1h-1zM99 449h1v1h-1zM677 444h1v1h-1zM643 442h1v1h-1zM251 416h1v1h-1zM100 433h1v1h-1zM376 469h1v1h-1zM781 495h1v1h-1zM514 443h1v1h-1zM104 501h1v1h-1zM323 394h1v1h-1zM188 400h1v1h-1zM145 455h1v1h-1zM301 448h1v1h-1zM398 420h1v1h-1zM423 442h1v1h-1zM871 428h1v1h-1zM99 462h1v1h-1zM279 468h1v1h-1zM196 437h1v1h-1zM239 461h1v1h-1zM804 380h1v1h-1zM268 443h1v1h-1zM111 424h1v1h-1zM379 448h1v1h-1zM624 427h1v1h-1zM272 457h1v1h-1zM379 489h1v1h-1zM442 499h1v1h-1zM619 454h1v1h-1zM337 490h1v1h-1zM568 483h1v1h-1zM593 397h1v1h-1zM415 436h1v1h-1zM72 461h1v1h-1zM348 501h1v1h-1zM150 505h1v1h-1zM421 475h1v1h-1zM798 435h1v1h-1zM530 396h1v1h-1zM300 471h1v1h-1zM79 455h1v1h-1zM75 500h1v1h-1zM556 399h1v1h-1zM346 470h1v1h-1zM597 432h1v1h-1zM163 418h1v1h-1zM329 428h1v1h-1zM554 419h1v1h-1zM779 393h1v1h-1zM418 424h1v1h-1zM791 430h1v1h-1zM254 450h1v1h-1zM166 438h1v1h-1zM476 441h1v1h-1zM479 497h1v1h-1zM183 467h1v1h-1zM707 494h1v1h-1zM290 449h1v1h-1zM282 470h1v1h-1zM75 420h1v1h-1zM621 463h1v1h-1zM381 469h1v1h-1zM591 457h1v1h-1zM301 506h1v1h-1zM332 442h1v1h-1zM378 463h1v1h-1zM66 466h1v1h-1zM639 433h1v1h-1zM88 445h1v1h-1zM340 414h1v1h-1zM537 471h1v1h-1zM526 445h1v1h-1zM698 403h1v1h-1zM81 476h1v1h-1zM309 428h1v1h-1zM112 425h1v1h-1zM360 451h1v1h-1zM592 416h1v1h-1zM232 422h1v1h-1zM619 470h1v1h-1zM213 477h1v1h-1zM251 455h1v1h-1zM393 455h1v1h-1zM231 506h1v1h-1zM362 460h1v1h-1zM246 454h1v1h-1zM507 416h1v1h-1zM559 434h1v1h-1zM207 421h1v1h-1zM431 444h1v1h-1zM362 466h1v1h-1zM189 477h1v1h-1zM780 451h1v1h-1zM80 407h1v1h-1zM405 464h1v1h-1zM313 456h1v1h-1zM511 443h1v1h-1zM198 505h1v1h-1zM162 480h1v1h-1zM280 396h1v1h-1zM346 458h1v1h-1zM536 400h1v1h-1zM90 480h1v1h-1zM508 386h1v1h-1zM150 500h1v1h-1zM415 444h1v1h-1zM363 454h1v1h-1zM696 429h1v1h-1zM213 434h1v1h-1zM101 414h1v1h-1zM221 468h1v1h-1zM383 504h1v1h-1zM266 451h1v1h-1zM630 439h1v1h-1zM334 435h1v1h-1zM92 520h1v1h-1zM239 508h1v1h-1zM806 364h1v1h-1zM232 413h1v1h-1zM426 436h1v1h-1zM305 444h1v1h-1zM420 482h1v1h-1zM618 458h1v1h-1zM273 423h1v1h-1zM233 482h1v1h-1zM62 463h1v1h-1zM75 420h1v1h-1zM234 489h1v1h-1zM360 443h1v1h-1zM194 460h1v1h-1zM57 521h1v1h-1zM485 499h1v1h-1zM335 404h1v1h-1zM615 404h1v1h-1z"/><path fill="#1e8cff" d="M323 402h1v1h-1zM499 410h1v1h-1zM85 441h1v1h-1zM157 390h1v1h-1zM534 369h1v1h-1zM174 416h1v1h-1zM204 401h1v1h-1zM509 420h1v1h-1zM619 401h1v1h-1zM431 383h1v1h-1zM257 411h1v1h-1zM660 360h1v1h-1zM180 420h1v1h-1zM536 426h1v1h-1zM448 407h1v1h-1zM375 418h1v1h-1zM194 417h1v1h-1zM161 414h1v1h-1zM121 392h1v1h-1zM285 409h1v1h-1zM200 425h1v1h-1zM544 411h1v1h-1zM361 441h1v1h-1zM482 394h1v1h-1zM380 412h1v1h-1zM106 438h1v1h-1zM337 430h1v1h-1zM138 415h1v1h-1zM564 412h1v1h-1zM357 434h1v1h-1zM441 427h1v1h-1zM339 454h1v1h-1zM73 440h1v1h-1zM505 395h1v1h-1zM271 413h1v1h-1zM328 436h1v1h-1zM242 438h1v1h-1zM77 423h1v1h-1zM237 433h1v1h-1zM124 448h1v1h-1zM202 415h1v1h-1zM656 414h1v1h-1zM175 370h1v1h-1zM345 434h1v1h-1zM741 404h1v1h-1zM254 425h1v1h-1zM163 427h1v1h-1zM471 428h1v1h-1zM420 405h1v1h-1zM197 397h1v1h-1zM325 386h1v1h-1zM142 434h1v1h-1zM563 401h1v1h-1zM430 400h1v1h-1zM752 398h1v1h-1zM114 422h1v1h-1zM182 407h1v1h-1zM385 356h1v1h-1zM188 430h1v1h-1zM217 408h1v1h-1zM514 415h1v1h-1zM141 418h1v1h-1zM279 408h1v1h-1zM735 383h1v1h-1zM128 402h1v1h-1zM114 394h1v1h-1zM124 416h1v1h-1zM431 378h1v1h-1zM277 430h1v1h-1zM145 436h1v1h-1zM313 398h1v1h-1zM470 428h1v1h-1zM262 394h1v1h-1zM211 460h1v1h-1zM381 379h1v1h-1zM390 428h1v1h-1zM113 438h1v1h-1zM124 450h1v1h-1zM288 422h1v1h-1zM185 411h1v1h-1zM311 424h1v1h-1zM448 413h1v1h-1zM58 432h1v1h-1zM89 437h1v1h-1zM541 378h1v1h-1zM378 375h1v1h-1zM90 452h1v1h-1zM170 415h1v1h-1zM245 427h1v1h-1zM141 397h1v1h-1zM461 380h1v1h-1zM472 395h1v1h-1zM666 409h1v1h-1zM660 364h1v1h-1zM464 407h1v1h-1zM588 414h1v1h-1zM672 384h1v1h-1zM104 397h1v1h-1zM616 405h1v1h-1zM442 448h1v1h-1zM69 445h1v1h-1zM427 400h1v1h-1zM229 423h1v1h-1zM458 413h1v1h-1zM429 419h1v1h-1zM55 464h1v1h-1zM363 316h1v1h-1zM354 433h1v1h-1zM139 413h1v1h-1zM261 432h1v1h-1zM652 376h1v1h-1zM292 457h1v1h-1zM446 406h1v1h-1zM599 380h1v1h-1zM193 412h1v1h-1zM467 429h1v1h-1zM428 428h1v1h-1zM338 427h1v1h-1zM398 421h1v1h-1zM106 387h1v1h-1zM472 447h1v1h-1zM279 423h1v1h-1zM779 387h1v1h-1zM542 394h1v1h-1zM145 421h1v1h-1zM434 405h1v1h-1zM590 414h1v1h-1zM147 424h1v1h-1zM376 401h1v1h-1zM305 444h1v1h-1zM249 445h1v1h-1zM309 415h1v1h-1zM403 379h1v1h-1zM242 426h1v1h-1zM621 371h1v1h-1zM474 366h1v1h-1zM735 388h1v1h-1zM466 415h1v1h-1zM176 411h1v1h-1zM172 429h1v1h-1zM674 376h1v1h-1zM365 433h1v1h-1zM287 457h1v1h-1zM95 415h1v1h-1zM214 462h1v1h-1zM691 415h1v1h-1zM336 444h1v1h-1zM272 429h1v1h-1zM57 453h1v1h-1zM838 392h1v1h-1zM375 417h1v1h-1zM559 412h1v1h-1zM704 391h1v1h-1zM260 421h1v1h-1zM274 422h1v1h-1zM249 392h1v1h-1zM606 438h1v1h-1zM525 389h1v1h-1zM260 410h1v1h-1zM535 393h1v1h-1zM476 436h1v1h-1zM88 438h1v1h-1zM270 458h1v1h-1zM235 433h1v1h-1zM266 402h1v1h-1zM63 409h1v1h-1zM313 392h1v1h-1zM107 426h1v1h-1zM585 400h1v1h-1zM395 402h1v1h-1zM314 423h1v1h-1zM356 398h1v1h-1zM59 419h1v1h-1zM437 412h1v1h-1zM128 427h1v1h-1zM175 412h1v1h-1zM144 443h1v1h-1zM218 440h1v1h-1zM455 443h1v1h-1zM739 375h1v1h-1zM743 400h1v1h-1zM484 420h1v1h-1zM88 412h1v1h-1zM751 367h1v1h-1zM575 404h1v1h-1zM408 417h1v1h-1zM73 437h1v1h-1zM435 427h1v1h-1zM161 428h1v1h-1zM478 394h1v1h-1zM479 416h1v1h-1zM108 409h1v1h-1zM732 383h1v1h-1zM227 429h1v1h-1zM85 415h1v1h-1zM194 424h1v1h-1zM583 433h1v1h-1zM577 384h1v1h-1zM353 428h1v1h-1zM672 436h1v1h-1zM314 431h1v1h-1zM566 394h1v1h-1zM164 410h1v1h-1zM56 433h1v1h-1zM240 403h1v1h-1zM572 392h1v1h-1zM256 418h1v1h-1zM388 412h1v1h-1zM521 384h1v1h-1zM91 436h1v1h-1zM103 426h1v1h-1zM220 419h1v1h-1zM730 404h1v1h-1zM94 397h1v1h-1zM59 403h1v1h-1zM242 438h1v1h-1zM333 384h1v1h-1zM645 377h1v1h-1zM274 455h1v1h-1zM785 403h1v1h-1zM674 434h1v1h-1zM528 405h1v1h-1zM119 442h1v1h-1zM143 438h1v1h-1zM78 399h1v1h-1zM109 418h1v1h-1zM109 445h1v1h-1zM143 441h1v1h-1zM579 420h1v1h-1zM683 403h1v1h-1zM71 422h1v1h-1zM360 445h1v1h-1zM80 420h1v1h-1zM342 428h1v1h-1zM771 432h1v1h-1zM55 392h1v1h-1zM58 420h1v1h-1zM207 414h1v1h-1zM290 394h1v1h-1zM145 418h1v1h-1zM576 410h1v1h-1zM794 434h1v1h-1zM225 451h1v1h-1zM248 415h1v1h-1zM344 408h1v1h-1zM195 396h1v1h-1zM159 459h1v1h-1zM213 390h1v1h-1zM182 431h1v1h-1zM488 421h1v1h-1zM139 430h1v1h-1zM217 433h1v1h-1zM377 408h1v1h-1zM580 403h1v1h-1zM390 445h1v1h-1zM404 380h1v1h-1zM587 402h1v1h-1zM135 396h1v1h-1zM577 408h1v1h-1zM571 370h1v1h-1zM206 400h1v1h-1zM86 420h1v1h-1zM138 395h1v1h-1zM229 415h1v1h-1zM349 421h1v1h-1zM65 423h1v1h-1zM347 411h1v1h-1zM236 432h1v1h-1zM161 450h1v1h-1zM444 399h1v1h-1zM347 439h1v1h-1zM443 395h1v1h-1zM367 428h1v1h-1zM56 437h1v1h-1zM305 416h1v1h-1zM602 425h1v1h-1zM101 448h1v1h-1zM171 410h1v1h-1zM64 408h1v1h-1zM138 418h1v1h-1zM342 439h1v1h-1zM194 392h1v1h-1zM218 416h1v1h-1zM515 422h1v1h-1zM464 424h1v1h-1zM462 401h1v1h-1zM59 427h1v1h-1zM366 455h1v1h-1zM78 392h1v1h-1zM478 451h1v1h-1zM358 409h1v1h-1zM229 422h1v1h-1zM473 397h1v1h-1zM329 416h1v1h-1zM87 454h1v1h-1zM95 438h1v1h-1zM620 378h1v1h-1zM688 416h1v1h-1zM599 427h1v1h-1zM521 412h1v1h-1zM319 383h1v1h-1zM99 440h1v1h-1zM66 393h1v1h-1zM397 395h1v1h-1zM180 420h1v1h-1zM127 442h1v1h-1zM652 382h1v1h-1zM96 394h1v1h-1zM660 370h1v1h-1zM650 397h1v1h-1zM733 390h1v1h-1zM192 439h1v1h-1zM359 412h1v1h-1zM174 421h1v1h-1zM577 397h1v1h-1zM525 394h1v1h-1zM330 359h1v1h-1zM554 395h1v1h-1zM367 382h1v1h-1zM55 426h1v1h-1zM89 447h1v1h-1zM529 430h1v1h-1zM342 385h1v1h-1zM221 457h1v1h-1zM441 406h1v1h-1zM127 407h1v1h-1zM450 423h1v1h-1zM204 423h1v1h-1zM388 431h1v1h-1zM142 408h1v1h-1zM550 424h1v1h-1zM82 455h1v1h-1zM525 384h1v1h-1zM265 432h1v1h-1zM124 393h1v1h-1zM810 367h1v1h-1zM268 385h1v1h-1zM611 416h1v1h-1zM238 428h1v1h-1zM750 364h1v1h-1zM100 392h1v1h-1zM616 371h1v1h-1zM142 439h1v1h-1zM454 425h1v1h-1zM617 384h1v1h-1zM84 415h1v1h-1zM170 412h1v1h-1zM430 443h1v1h-1zM576 421h1v1h-1zM174 428h1v1h-1zM183 456h1v1h-1zM193 412h1v1h-1zM101 408h1v1h-1zM451 423h1v1h-1zM135 464h1v1h-1zM658 363h1v1h-1zM170 452h1v1h-1zM208 458h1v1h-1zM529 400h1v1h-1zM645 416h1v1h-1zM560 417h1v1h-1zM222 399h1v1h-1zM654 435h1v1h-1zM464 441h1v1h-1zM209 435h1v1h-1zM362 417h1v1h-1zM424 408h1v1h-1zM321 412h1v1h-1zM105 455h1v1h-1zM481 427h1v1h-1zM206 415h1v1h-1zM79 409h1v1h-1zM69 402h1v1h-1zM638 426h1v1h-1zM92 428h1v1h-1zM286 433h1v1h-1zM176 406h1v1h-1zM377 444h1v1h-1zM254 407h1v1h-1zM99 445h1v1h-1zM261 398h1v1h-1zM495 411h1v1h-1zM71 370h1v1h-1zM789 371h1v1h-1zM618 367h1v1h-1zM570 409h1v1h-1zM308 417h1v1h-1zM277 433h1v1h-1zM157 429h1v1h-1zM294 419h1v1h-1zM221 422h1v1h-1zM563 416h1v1h-1zM238 420h1v1h-1zM64 461h1v1h-1zM517 394h1v1h-1zM300 434h1v1h-1zM106 421h1v1h-1zM145 448h1v1h-1zM182 420h1v1h-1zM778 365h1v1h-1zM529 374h1v1h-1zM559 409h1v1h-1zM655 400h1v1h-1zM374 382h1v1h-1zM469 419h1v1h-1zM174 408h1v1h-1zM63 402h1v1h-1zM484 387h1v1h-1zM351 404h1v1h-1zM136 425h1v1h-1zM420 368h1v1h-1zM196 365h1v1h-1zM480 435h1v1h-1zM184 425h1v1h-1zM210 395h1v1h-1zM583 397h1v1h-1zM309 426h1v1h-1zM609 403h1v1h-1zM275 406h1v1h-1zM531 420h1v1h-1zM685 411h1v1h-1zM106 405h1v1h-1zM649 410h1v1h-1zM137 404h1v1h-1zM428 402h1v1h-1zM419 430h1v1h-1zM256 402h1v1h-1zM256 432h1v1h-1zM521 413h1v1h-1zM389 406h1v1h-1zM346 425h1v1h-1zM251 399h1v1h-1zM184 433h1v1h-1zM748 385h1v1h-1zM723 390h1v1h-1zM474 424h1v1h-1zM641 429h1v1h-1zM360 397h1v1h-1zM779 393h1v1h-1zM279 416h1v1h-1zM526 423h1v1h-1zM201 420h1v1h-1zM145 427h1v1h-1zM301 429h1v1h-1zM159 429h1v1h-1zM164 420h1v1h-1zM605 400h1v1h-1zM635 435h1v1h-1zM577 393h1v1h-1zM88 438h1v1h-1zM306 426h1v1h-1zM584 433h1v1h-1zM650 396h1v1h-1zM344 440h1v1h-1zM292 446h1v1h-1zM93 419h1v1h-1zM677 376h1v1h-1zM288 450h1v1h-1zM576 400h1v1h-1zM410 452h1v1h-1zM687 366h1v1h-1zM271 367h1v1h-1zM506 415h1v1h-1zM396 428h1v1h-1zM252 424h1v1h-1zM172 416h1v1h-1zM195 399h1v1h-1zM149 436h1v1h-1zM104 422h1v1h-1zM426 416h1v1h-1zM356 434h1v1h-1zM124 375h1v1h-1zM144 436h1v1h-1zM505 435h1v1h-1zM596 417h1v1h-1zM77 460h1v1h-1zM208 442h1v1h-1zM194 446h1v1h-1zM325 451h1v1h-1zM360 407h1v1h-1zM253 393h1v1h-1zM465 419h1v1h-1zM537 389h1v1h-1zM129 437h1v1h-1zM655 422h1v1h-1zM289 424h1v1h-1zM335 385h1v1h-1zM300 397h1v1h-1zM216 425h1v1h-1zM728 368h1v1h-1zM301 448h1v1h-1zM592 393h1v1h-1zM77 403h1v1h-1zM125 425h1v1h-1zM400 391h1v1h-1zM149 452h1v1h-1zM147 439h1v1h-1zM495 409h1v1h-1zM242 423h1v1h-1zM543 422h1v1h-1zM683 343h1v1h-1zM139 437h1v1h-1zM698 382h1v1h-1zM251 420h1v1h-1zM231 398h1v1h-1zM194 417h1v1h-1zM156 390h1v1h-1zM654 383h1v1h-1zM148 405h1v1h-1zM215 449h1v1h-1zM148 417h1v1h-1zM208 419h1v1h-1zM370 444h1v1h-1zM842 403h1v1h-1zM719 387h1v1h-1zM619 415h1v1h-1zM117 415h1v1h-1zM544 413h1v1h-1zM443 418h1v1h-1zM59 444h1v1h-1zM92 407h1v1h-1zM281 419h1v1h-1zM356 383h1v1h-1zM307 393h1v1h-1zM582 381h1v1h-1zM104 413h1v1h-1zM454 422h1v1h-1zM344 407h1v1h-1zM431 392h1v1h-1zM194 431h1v1h-1zM121 390h1v1h-1zM351 406h1v1h-1zM110 459h1v1h-1zM268 429h1v1h-1zM639 413h1v1h-1zM593 368h1v1h-1zM553 427h1v1h-1zM338 418h1v1h-1zM326 395h1v1h-1zM618 407h1v1h-1zM92 428h1v1h-1zM551 424h1v1h-1zM328 431h1v1h-1zM692 430h1v1h-1zM502 380h1v1h-1zM554 386h1v1h-1zM699 361h1v1h-1zM431 400h1v1h-1zM164 421h1v1h-1zM683 413h1v1h-1zM104 408h1v1h-1zM178 389h1v1h-1zM189 404h1v1h-1zM583 435h1v1h-1zM144 422h1v1h-1zM104 415h1v1h-1zM240 425h1v1h-1zM246 393h1v1h-1zM234 412h1v1h-1zM289 409h1v1h-1zM188 399h1v1h-1zM228 415h1v1h-1zM771 412h1v1h-1zM301 405h1v1h-1zM62 422h1v1h-1zM135 409h1v1h-1zM249 406h1v1h-1zM473 425h1v1h-1zM71 417h1v1h-1zM154 429h1v1h-1zM203 417h1v1h-1zM470 412h1v1h-1zM281 435h1v1h-1zM90 427h1v1h-1zM355 388h1v1h-1zM506 372h1v1h-1zM386 401h1v1h-1zM376 428h1v1h-1zM266 430h1v1h-1zM219 445h1v1h-1zM809 369h1v1h-1zM55 455h1v1h-1zM249 399h1v1h-1zM646 399h1v1h-1zM617 376h1v1h-1zM240 410h1v1h-1zM488 423h1v1h-1zM489 445h1v1h-1zM197 420h1v1h-1zM775 383h1v1h-1zM734 406h1v1h-1zM139 453h1v1h-1zM430 398h1v1h-1zM685 376h1v1h-1zM487 417h1v1h-1zM371 415h1v1h-1zM102 406h1v1h-1zM323 456h1v1h-1zM222 394h1v1h-1zM363 422h1v1h-1zM646 398h1v1h-1zM374 452h1v1h-1zM363 431h1v1h-1zM491 433h1v1h-1zM75 430h1v1h-1zM420 404h1v1h-1zM388 388h1v1h-1zM152 417h1v1h-1zM139 399h1v1h-1zM100 402h1v1h-1zM100 425h1v1h-1zM779 394h1v1h-1zM59 436h1v1h-1zM314 446h1v1h-1zM479 418h1v1h-1zM222 428h1v1h-1zM440 390h1v1h-1zM720 426h1v1h-1zM97 431h1v1h-1zM523 400h1v1h-1zM296 446h1v1h-1zM102 411h1v1h-1zM771 374h1v1h-1zM299 456h1v1h-1zM138 390h1v1h-1zM399 403h1v1h-1zM624 397h1v1h-1zM89 437h1v1h-1zM538 389h1v1h-1zM753 358h1v1h-1zM379 412h1v1h-1zM240 424h1v1h-1zM618 442h1v1h-1zM296 394h1v1h-1zM827 379h1v1h-1zM127 415h1v1h-1zM822 354h1v1h-1zM600 407h1v1h-1zM260 413h1v1h-1zM302 403h1v1h-1zM549 408h1v1h-1zM135 425h1v1h-1zM347 399h1v1h-1zM178 461h1v1h-1zM466 413h1v1h-1zM190 429h1v1h-1zM218 436h1v1h-1zM253 410h1v1h-1zM67 420h1v1h-1zM245 430h1v1h-1zM80 435h1v1h-1zM794 372h1v1h-1zM645 399h1v1h-1zM819 424h1v1h-1zM392 409h1v1h-1zM618 416h1v1h-1zM219 409h1v1h-1zM453 377h1v1h-1zM219 444h1v1h-1zM131 438h1v1h-1zM674 419h1v1h-1zM545 430h1v1h-1zM263 432h1v1h-1zM435 401h1v1h-1zM392 382h1v1h-1zM336 440h1v1h-1zM58 441h1v1h-1zM557 417h1v1h-1zM569 414h1v1h-1zM154 416h1v1h-1zM207 454h1v1h-1zM240 388h1v1h-1zM382 444h1v1h-1zM744 414h1v1h-1zM262 421h1v1h-1zM117 413h1v1h-1zM355 394h1v1h-1zM101 400h1v1h-1zM677 413h1v1h-1zM174 409h1v1h-1zM380 395h1v1h-1zM688 374h1v1h-1zM285 387h1v1h-1zM170 460h1v1h-1zM668 416h1v1h-1zM301 357h1v1h-1zM210 458h1v1h-1zM321 427h1v1h-1zM381 450h1v1h-1zM316 394h1v1h-1zM679 387h1v1h-1zM494 389h1v1h-1zM695 427h1v1h-1zM275 420h1v1h-1zM146 390h1v1h-1zM338 450h1v1h-1zM208 424h1v1h-1zM165 429h1v1h-1zM389 405h1v1h-1zM180 399h1v1h-1zM163 397h1v1h-1zM283 387h1v1h-1zM281 434h1v1h-1zM635 436h1v1h-1zM57 436h1v1h-1zM103 395h1v1h-1zM87 437h1v1h-1zM577 404h1v1h-1zM235 413h1v1h-1zM79 428h1v1h-1zM406 384h1v1h-1zM540 406h1v1h-1zM242 364h1v1h-1zM451 407h1v1h-1zM338 426h1v1h-1zM215 426h1v1h-1zM218 431h1v1h-1zM106 417h1v1h-1zM273 418h1v1h-1zM91 416h1v1h-1zM139 418h1v1h-1zM161 399h1v1h-1zM228 411h1v1h-1zM165 423h1v1h-1zM369 438h1v1h-1zM439 441h1v1h-1zM113 393h1v1h-1zM457 421h1v1h-1zM140 436h1v1h-1zM433 382h1v1h-1zM419 398h1v1h-1zM445 382h1v1h-1zM253 396h1v1h-1zM172 409h1v1h-1zM244 389h1v1h-1zM86 369h1v1h-1zM86 415h1v1h-1zM236 447h1v1h-1zM181 407h1v1h-1zM209 424h1v1h-1zM142 444h1v1h-1zM56 395h1v1h-1zM472 378h1v1h-1zM119 406h1v1h-1zM384 400h1v1h-1zM435 393h1v1h-1zM411 363h1v1h-1zM347 384h1v1h-1zM759 402h1v1h-1zM688 362h1v1h-1zM693 413h1v1h-1zM486 408h1v1h-1zM650 367h1v1h-1zM264 428h1v1h-1zM133 372h1v1h-1zM679 403h1v1h-1zM71 446h1v1h-1zM327 384h1v1h-1zM141 423h1v1h-1zM359 453h1v1h-1zM128 415h1v1h-1zM65 391h1v1h-1zM200 394h1v1h-1zM260 416h1v1h-1zM228 447h1v1h-1zM307 436h1v1h-1zM354 418h1v1h-1zM281 434h1v1h-1zM306 395h1v1h-1zM659 434h1v1h-1zM746 432h1v1h-1zM611 415h1v1h-1zM603 418h1v1h-1zM240 412h1v1h-1zM356 409h1v1h-1zM263 434h1v1h-1zM260 426h1v1h-1zM690 409h1v1h-1zM373 391h1v1h-1zM777 359h1v1h-1zM249 435h1v1h-1zM132 437h1v1h-1zM246 437h1v1h-1zM354 444h1v1h-1zM113 400h1v1h-1zM767 424h1v1h-1zM253 456h1v1h-1zM123 455h1v1h-1zM662 408h1v1h-1zM225 436h1v1h-1zM204 398h1v1h-1zM74 401h1v1h-1zM249 393h1v1h-1zM175 447h1v1h-1zM243 459h1v1h-1zM234 435h1v1h-1zM213 388h1v1h-1zM388 402h1v1h-1zM248 409h1v1h-1zM570 442h1v1h-1zM321 414h1v1h-1zM73 419h1v1h-1zM54 430h1v1h-1zM168 411h1v1h-1zM178 423h1v1h-1zM791 405h1v1h-1zM541 396h1v1h-1zM97 443h1v1h-1zM295 360h1v1h-1zM403 436h1v1h-1zM151 398h1v1h-1zM117 408h1v1h-1zM629 408h1v1h-1zM115 402h1v1h-1zM62 398h1v1h-1zM592 427h1v1h-1zM248 456h1v1h-1zM665 368h1v1h-1zM160 433h1v1h-1zM84 431h1v1h-1zM119 452h1v1h-1zM350 429h1v1h-1zM454 393h1v1h-1zM217 432h1v1h-1zM543 407h1v1h-1zM657 418h1v1h-1zM198 433h1v1h-1zM274 383h1v1h-1zM149 385h1v1h-1zM333 422h1v1h-1zM452 427h1v1h-1zM189 394h1v1h-1zM273 398h1v1h-1zM463 439h1v1h-1zM97 404h1v1h-1zM650 368h1v1h-1zM132 421h1v1h-1zM246 395h1v1h-1zM169 408h1v1h-1zM581 409h1v1h-1zM80 435h1v1h-1zM224 402h1v1h-1zM185 391h1v1h-1zM316 416h1v1h-1zM128 438h1v1h-1zM438 414h1v1h-1zM487 384h1v1h-1zM698 403h1v1h-1zM456 392h1v1h-1zM318 387h1v1h-1zM363 435h1v1h-1zM568 402h1v1h-1zM286 359h1v1h-1zM161 404h1v1h-1zM111 402h1v1h-1zM125 413h1v1h-1zM97 410h1v1h-1zM143 426h1v1h-1zM746 388h1v1h-1zM408 424h1v1h-1zM270 440h1v1h-1zM556 400h1v1h-1zM664 386h1v1h-1zM143 435h1v1h-1zM266 380h1v1h-1zM198 435h1v1h-1zM63 393h1v1h-1zM275 426h1v1h-1zM368 404h1v1h-1zM395 438h1v1h-1zM730 373h1v1h-1zM752 402h1v1h-1zM784 417h1v1h-1zM94 403h1v1h-1zM336 384h1v1h-1zM232 436h1v1h-1zM326 399h1v1h-1zM113 408h1v1h-1zM438 431h1v1h-1zM312 448h1v1h-1zM530 374h1v1h-1zM485 399h1v1h-1zM607 409h1v1h-1zM158 423h1v1h-1zM411 405h1v1h-1zM239 457h1v1h-1zM414 379h1v1h-1zM222 417h1v1h-1zM209 419h1v1h-1zM715 426h1v1h-1zM226 411h1v1h-1zM519 376h1v1h-1zM406 423h1v1h-1zM403 429h1v1h-1zM59 397h1v1h-1zM251 433h1v1h-1zM222 392h1v1h-1zM280 459h1v1h-1zM126 397h1v1h-1zM172 388h1v1h-1zM333 429h1v1h-1zM188 403h1v1h-1zM189 435h1v1h-1zM316 420h1v1h-1zM446 394h1v1h-1zM195 388h1v1h-1zM389 421h1v1h-1zM628 391h1v1h-1zM530 432h1v1h-1zM349 448h1v1h-1zM413 385h1v1h-1zM175 446h1v1h-1zM511 423h1v1h-1zM76 429h1v1h-1zM345 443h1v1h-1zM450 410h1v1h-1zM707 403h1v1h-1zM502 400h1v1h-1zM187 435h1v1h-1zM103 436h1v1h-1zM102 396h1v1h-1zM128 437h1v1h-1zM375 439h1v1h-1zM86 443h1v1h-1zM147 423h1v1h-1zM415 424h1v1h-1zM641 414h1v1h-1zM346 417h1v1h-1zM620 394h1v1h-1zM532 435h1v1h-1zM334 438h1v1h-1zM172 420h1v1h-1zM58 402h1v1h-1zM59 424h1v1h-1zM565 415h1v1h-1zM318 416h1v1h-1zM186 432h1v1h-1zM821 415h1v1h-1zM178 390h1v1h-1zM541 446h1v1h-1zM700 412h1v1h-1zM658 371h1v1h-1zM135 407h1v1h-1zM598 391h1v1h-1zM409 437h1v1h-1zM447 394h1v1h-1zM619 351h1v1h-1zM669 376h1v1h-1zM261 423h1v1h-1zM126 464h1v1h-1zM440 382h1v1h-1zM208 460h1v1h-1zM209 435h1v1h-1zM707 435h1v1h-1zM136 450h1v1h-1zM673 390h1v1h-1zM187 401h1v1h-1zM193 425h1v1h-1zM277 389h1v1h-1zM544 440h1v1h-1zM171 378h1v1h-1zM509 420h1v1h-1zM157 398h1v1h-1zM353 403h1v1h-1zM107 408h1v1h-1zM476 436h1v1h-1zM647 405h1v1h-1zM526 396h1v1h-1zM65 419h1v1h-1zM138 415h1v1h-1zM482 363h1v1h-1zM634 420h1v1h-1zM146 438h1v1h-1zM357 434h1v1h-1zM597 377h1v1h-1zM266 433h1v1h-1zM187 397h1v1h-1zM397 430h1v1h-1zM405 394h1v1h-1zM739 398h1v1h-1zM376 396h1v1h-1zM430 440h1v1h-1zM204 430h1v1h-1zM128 433h1v1h-1zM257 428h1v1h-1zM410 427h1v1h-1zM184 425h1v1h-1zM333 387h1v1h-1zM478 386h1v1h-1zM603 445h1v1h-1zM239 436h1v1h-1zM332 398h1v1h-1zM387 428h1v1h-1zM113 366h1v1h-1zM137 436h1v1h-1zM447 425h1v1h-1zM92 463h1v1h-1zM322 388h1v1h-1zM343 412h1v1h-1zM418 408h1v1h-1zM183 407h1v1h-1zM370 432h1v1h-1zM217 429h1v1h-1zM365 397h1v1h-1zM285 424h1v1h-1zM606 412h1v1h-1zM478 415h1v1h-1zM231 430h1v1h-1zM353 398h1v1h-1zM248 392h1v1h-1zM281 436h1v1h-1zM722 411h1v1h-1zM459 413h1v1h-1zM419 400h1v1h-1zM206 411h1v1h-1zM409 391h1v1h-1zM153 430h1v1h-1zM549 412h1v1h-1zM369 409h1v1h-1zM331 399h1v1h-1zM71 407h1v1h-1zM220 457h1v1h-1zM322 415h1v1h-1zM554 417h1v1h-1zM313 407h1v1h-1zM254 420h1v1h-1zM367 384h1v1h-1zM278 406h1v1h-1zM99 424h1v1h-1zM510 447h1v1h-1zM270 406h1v1h-1zM130 443h1v1h-1zM132 429h1v1h-1zM476 384h1v1h-1zM478 400h1v1h-1zM228 429h1v1h-1zM290 451h1v1h-1zM149 432h1v1h-1zM335 449h1v1h-1zM388 386h1v1h-1zM425 405h1v1h-1zM366 426h1v1h-1zM447 409h1v1h-1zM631 384h1v1h-1zM563 413h1v1h-1zM512 406h1v1h-1zM166 398h1v1h-1zM529 398h1v1h-1zM356 358h1v1h-1zM596 388h1v1h-1zM659 438h1v1h-1zM67 419h1v1h-1zM76 442h1v1h-1zM573 414h1v1h-1zM715 420h1v1h-1zM662 387h1v1h-1zM770 368h1v1h-1zM288 454h1v1h-1zM632 413h1v1h-1zM478 404h1v1h-1zM351 411h1v1h-1zM601 417h1v1h-1zM218 414h1v1h-1zM132 401h1v1h-1zM367 419h1v1h-1zM56 419h1v1h-1zM574 384h1v1h-1zM417 450h1v1h-1zM138 438h1v1h-1zM238 434h1v1h-1zM206 425h1v1h-1zM501 400h1v1h-1zM68 443h1v1h-1zM501 388h1v1h-1zM658 371h1v1h-1zM363 413h1v1h-1zM628 371h1v1h-1zM138 464h1v1h-1zM260 435h1v1h-1zM461 414h1v1h-1zM655 418h1v1h-1zM328 386h1v1h-1zM84 415h1v1h-1zM380 402h1v1h-1zM480 403h1v1h-1zM202 454h1v1h-1zM437 412h1v1h-1zM773 382h1v1h-1zM867 358h1v1h-1zM163 394h1v1h-1zM224 394h1v1h-1zM72 426h1v1h-1zM334 397h1v1h-1zM150 413h1v1h-1zM75 439h1v1h-1zM382 429h1v1h-1zM488 363h1v1h-1zM416 368h1v1h-1zM286 423h1v1h-1zM283 424h1v1h-1zM252 437h1v1h-1zM306 403h1v1h-1zM822 384h1v1h-1zM70 430h1v1h-1zM67 442h1v1h-1zM129 438h1v1h-1zM263 459h1v1h-1zM671 432h1v1h-1zM137 398h1v1h-1zM653 413h1v1h-1zM417 392h1v1h-1zM282 412h1v1h-1zM466 412h1v1h-1zM365 450h1v1h-1zM268 402h1v1h-1zM120 435h1v1h-1zM566 400h1v1h-1zM134 428h1v1h-1zM90 457h1v1h-1zM407 383h1v1h-1zM594 378h1v1h-1zM314 385h1v1h-1zM196 405h1v1h-1zM334 412h1v1h-1zM240 412h1v1h-1zM305 436h1v1h-1zM416 403h1v1h-1zM366 451h1v1h-1zM264 415h1v1h-1zM538 416h1v1h-1zM158 420h1v1h-1zM182 429h1v1h-1zM213 391h1v1h-1zM525 440h1v1h-1zM139 391h1v1h-1zM424 392h1v1h-1zM145 459h1v1h-1zM160 431h1v1h-1zM579 363h1v1h-1zM117 428h1v1h-1zM252 426h1v1h-1zM322 376h1v1h-1zM333 433h1v1h-1zM536 417h1v1h-1zM570 382h1v1h-1zM463 405h1v1h-1zM150 442h1v1h-1zM684 425h1v1h-1zM260 429h1v1h-1zM330 445h1v1h-1z"/><path fill="#00ff00" d="M247 517h1v1h-1zM288 505h1v1h-1zM510 479h1v1h-1zM488 508h1v1h-1zM231 523h1v1h-1zM399 486h1v1h-1zM429 483h1v1h-1zM619 499h1v1h-1zM240 479h1v1h-1zM96 499h1v1h-1zM319 522h1v1h-1zM278 540h1v1h-1zM542 512h1v1h-1zM235 503h1v1h-1zM734 487h1v1h-1zM618 482h1v1h-1zM494 494h1v1h-1zM308 466h1v1h-1zM514 496h1v1h-1zM408 498h1v1h-1zM531 483h1v1h-1zM216 505h1v1h-1zM615 484h1v1h-1zM91 489h1v1h-1zM270 490h1v1h-1zM380 489h1v1h-1zM74 534h1v1h-1zM126 507h1v1h-1zM75 517h1v1h-1zM80 533h1v1h-1zM607 485h1v1h-1zM400 481h1v1h-1zM608 472h1v1h-1zM174 487h1v1h-1zM372 505h1v1h-1zM290 516h1v1h-1zM267 484h1v1h-1zM486 501h1v1h-1zM351 511h1v1h-1zM216 490h1v1h-1zM244 524h1v1h-1zM256 505h1v1h-1zM529 511h1v1h-1zM87 495h1v1h-1zM666 505h1v1h-1zM662 497h1v1h-1zM302 488h1v1h-1zM291 487h1v1h-1zM473 488h1v1h-1zM373 486h1v1h-1zM409 497h1v1h-1zM261 482h1v1h-1zM482 523h1v1h-1zM338 513h1v1h-1zM720 496h1v1h-1zM381 511h1v1h-1zM628 493h1v1h-1zM374 465h1v1h-1zM435 511h1v1h-1zM447 496h1v1h-1zM198 497h1v1h-1zM372 493h1v1h-1zM725 445h1v1h-1zM358 506h1v1h-1zM358 502h1v1h-1zM522 502h1v1h-1zM193 503h1v1h-1zM232 495h1v1h-1zM372 510h1v1h-1zM286 517h1v1h-1zM145 498h1v1h-1zM200 522h1v1h-1zM706 490h1v1h-1zM440 504h1v1h-1zM281 535h1v1h-1zM618 512h1v1h-1zM80 505h1v1h-1zM56 507h1v1h-1zM421 484h1v1h-1zM240 502h1v1h-1zM69 541h1v1h-1zM294 526h1v1h-1zM374 517h1v1h-1zM363 519h1v1h-1zM763 501h1v1h-1zM120 500h1v1h-1zM292 498h1v1h-1zM145 488h1v1h-1zM228 506h1v1h-1zM274 487h1v1h-1zM511 492h1v1h-1zM675 496h1v1h-1zM312 518h1v1h-1zM808 471h1v1h-1zM84 487h1v1h-1zM414 515h1v1h-1zM619 488h1v1h-1zM88 504h1v1h-1zM276 530h1v1h-1zM107 502h1v1h-1zM248 529h1v1h-1zM411 512h1v1h-1zM654 506h1v1h-1zM74 532h1v1h-1zM297 512h1v1h-1zM626 472h1v1h-1zM650 478h1v1h-1zM362 479h1v1h-1zM133 485h1v1h-1zM879 493h1v1h-1zM226 482h1v1h-1zM116 486h1v1h-1zM164 504h1v1h-1zM206 501h1v1h-1zM805 475h1v1h-1zM266 496h1v1h-1zM461 499h1v1h-1zM252 488h1v1h-1zM614 466h1v1h-1zM55 521h1v1h-1zM283 486h1v1h-1zM412 496h1v1h-1zM344 506h1v1h-1zM474 479h1v1h-1zM544 510h1v1h-1zM172 519h1v1h-1zM286 539h1v1h-1zM427 482h1v1h-1zM624 504h1v1h-1zM454 488h1v1h-1zM663 488h1v1h-1zM725 474h1v1h-1zM196 504h1v1h-1zM283 496h1v1h-1zM567 519h1v1h-1zM87 492h1v1h-1zM375 483h1v1h-1zM682 499h1v1h-1zM673 520h1v1h-1zM214 487h1v1h-1zM73 527h1v1h-1zM525 488h1v1h-1zM292 481h1v1h-1zM256 484h1v1h-1zM303 525h1v1h-1zM214 468h1v1h-1zM89 492h1v1h-1zM205 511h1v1h-1zM537 511h1v1h-1zM617 524h1v1h-1zM610 518h1v1h-1zM104 519h1v1h-1zM344 519h1v1h-1zM253 492h1v1h-1zM286 495h1v1h-1zM557 472h1v1h-1zM495 504h1v1h-1zM287 489h1v1h-1zM702 466h1v1h-1zM587 456h1v1h-1zM207 498h1v1h-1zM77 528h1v1h-1zM215 519h1v1h-1zM333 490h1v1h-1zM290 487h1v1h-1zM170 493h1v1h-1zM725 506h1v1h-1zM347 486h1v1h-1zM230 515h1v1h-1zM605 507h1v1h-1zM496 512h1v1h-1zM146 503h1v1h-1zM214 522h1v1h-1zM237 523h1v1h-1zM772 464h1v1h-1zM365 497h1v1h-1zM328 491h1v1h-1zM807 478h1v1h-1zM275 512h1v1h-1zM151 521h1v1h-1zM528 519h1v1h-1zM456 490h1v1h-1zM511 527h1v1h-1zM163 522h1v1h-1zM487 527h1v1h-1zM454 498h1v1h-1zM222 514h1v1h-1zM574 477h1v1h-1zM561 476h1v1h-1zM578 474h1v1h-1zM69 499h1v1h-1zM261 519h1v1h-1zM462 531h1v1h-1zM694 502h1v1h-1zM499 484h1v1h-1zM242 507h1v1h-1zM425 513h1v1h-1zM481 525h1v1h-1zM435 475h1v1h-1zM157 517h1v1h-1zM306 505h1v1h-1zM770 516h1v1h-1zM416 533h1v1h-1zM192 508h1v1h-1zM372 505h1v1h-1zM476 476h1v1h-1zM72 493h1v1h-1zM330 498h1v1h-1zM443 492h1v1h-1zM117 510h1v1h-1zM421 512h1v1h-1zM67 509h1v1h-1zM55 537h1v1h-1zM376 485h1v1h-1zM604 482h1v1h-1zM227 485h1v1h-1zM223 516h1v1h-1zM241 496h1v1h-1zM253 517h1v1h-1zM97 499h1v1h-1zM95 535h1v1h-1zM308 508h1v1h-1zM99 519h1v1h-1zM329 513h1v1h-1zM230 509h1v1h-1zM296 484h1v1h-1zM242 499h1v1h-1zM642 509h1v1h-1zM282 480h1v1h-1zM355 480h1v1h-1zM217 533h1v1h-1zM422 499h1v1h-1zM359 483h1v1h-1zM254 489h1v1h-1zM644 503h1v1h-1zM340 494h1v1h-1zM412 509h1v1h-1zM244 487h1v1h-1zM269 507h1v1h-1zM545 507h1v1h-1zM286 516h1v1h-1zM322 521h1v1h-1zM582 477h1v1h-1zM208 496h1v1h-1zM293 533h1v1h-1zM383 526h1v1h-1zM613 496h1v1h-1zM108 514h1v1h-1zM254 487h1v1h-1zM459 515h1v1h-1zM135 521h1v1h-1zM108 496h1v1h-1zM96 520h1v1h-1zM711 477h1v1h-1zM196 522h1v1h-1zM457 517h1v1h-1zM349 514h1v1h-1zM557 470h1v1h-1zM128 519h1v1h-1zM193 517h1v1h-1zM75 521h1v1h-1zM444 480h1v1h-1zM201 488h1v1h-1zM176 521h1v1h-1zM155 499h1v1h-1zM535 502h1v1h-1zM58 495h1v1h-1zM396 475h1v1h-1zM542 492h1v1h-1zM298 484h1v1h-1zM433 534h1v1h-1zM454 497h1v1h-1zM66 508h1v1h-1zM306 507h1v1h-1zM140 504h1v1h-1zM644 481h1v1h-1zM240 503h1v1h-1zM823 515h1v1h-1zM193 524h1v1h-1zM409 528h1v1h-1zM439 487h1v1h-1zM70 487h1v1h-1zM622 497h1v1h-1zM150 526h1v1h-1zM436 472h1v1h-1zM158 500h1v1h-1zM273 522h1v1h-1zM221 492h1v1h-1zM172 497h1v1h-1zM315 506h1v1h-1zM254 515h1v1h-1zM86 540h1v1h-1zM289 489h1v1h-1zM609 453h1v1h-1zM298 519h1v1h-1zM534 489h1v1h-1zM196 509h1v1h-1zM209 517h1v1h-1zM320 531h1v1h-1zM342 506h1v1h-1zM150 512h1v1h-1zM106 502h1v1h-1zM517 483h1v1h-1zM384 492h1v1h-1zM452 482h1v1h-1zM275 509h1v1h-1zM151 494h1v1h-1zM181 521h1v1h-1zM578 478h1v1h-1zM341 482h1v1h-1zM312 513h1v1h-1zM213 482h1v1h-1zM567 508h1v1h-1zM464 487h1v1h-1zM618 510h1v1h-1zM249 533h1v1h-1zM130 497h1v1h-1zM467 513h1v1h-1zM504 492h1v1h-1zM120 521h1v1h-1zM489 531h1v1h-1zM620 454h1v1h-1zM85 513h1v1h-1zM325 498h1v1h-1zM378 526h1v1h-1zM570 472h1v1h-1zM436 508h1v1h-1zM209 493h1v1h-1zM744 488h1v1h-1zM302 511h1v1h-1zM345 495h1v1h-1zM425 497h1v1h-1zM64 517h1v1h-1zM149 525h1v1h-1zM301 498h1v1h-1zM109 520h1v1h-1zM364 495h1v1h-1zM555 484h1v1h-1zM425 506h1v1h-1zM216 498h1v1h-1zM605 495h1v1h-1zM597 506h1v1h-1zM431 474h1v1h-1zM154 517h1v1h-1zM494 506h1v1h-1zM264 469h1v1h-1zM353 463h1v1h-1zM133 485h1v1h-1zM420 493h1v1h-1zM252 486h1v1h-1zM331 481h1v1h-1zM532 504h1v1h-1zM140 492h1v1h-1zM60 522h1v1h-1zM630 503h1v1h-1zM132 522h1v1h-1zM365 517h1v1h-1zM127 520h1v1h-1zM207 476h1v1h-1zM223 514h1v1h-1zM713 473h1v1h-1zM82 501h1v1h-1zM214 483h1v1h-1zM66 525h1v1h-1zM550 476h1v1h-1zM292 490h1v1h-1zM85 512h1v1h-1zM191 513h1v1h-1zM591 487h1v1h-1zM404 519h1v1h-1zM308 501h1v1h-1zM302 508h1v1h-1zM321 484h1v1h-1zM200 480h1v1h-1zM513 510h1v1h-1zM468 498h1v1h-1zM107 486h1v1h-1zM222 516h1v1h-1zM438 500h1v1h-1zM107 477h1v1h-1zM386 487h1v1h-1zM628 505h1v1h-1zM636 528h1v1h-1zM748 472h1v1h-1zM181 519h1v1h-1zM70 491h1v1h-1zM449 534h1v1h-1zM626 503h1v1h-1zM760 522h1v1h-1zM825 477h1v1h-1zM235 482h1v1h-1zM654 477h1v1h-1zM135 518h1v1h-1zM631 527h1v1h-1zM243 493h1v1h-1zM323 498h1v1h-1zM495 479h1v1h-1zM700 473h1v1h-1zM242 508h1v1h-1zM72 535h1v1h-1zM407 506h1v1h-1zM68 518h1v1h-1zM232 522h1v1h-1zM494 516h1v1h-1zM416 500h1v1h-1zM569 507h1v1h-1zM185 535h1v1h-1zM97 511h1v1h-1zM368 492h1v1h-1zM485 494h1v1h-1zM188 497h1v1h-1zM351 510h1v1h-1zM158 486h1v1h-1zM544 475h1v1h-1zM281 522h1v1h-1zM146 493h1v1h-1zM127 482h1v1h-1zM135 525h1v1h-1zM440 493h1v1h-1zM109 524h1v1h-1zM472 485h1v1h-1zM680 464h1v1h-1zM576 501h1v1h-1zM116 522h1v1h-1zM111 525h1v1h-1zM68 490h1v1h-1zM65 511h1v1h-1zM322 517h1v1h-1zM579 507h1v1h-1zM275 480h1v1h-1zM510 485h1v1h-1zM540 511h1v1h-1zM508 519h1v1h-1zM253 508h1v1h-1zM432 518h1v1h-1zM291 514h1v1h-1zM244 486h1v1h-1zM545 507h1v1h-1zM143 502h1v1h-1zM440 509h1v1h-1zM540 473h1v1h-1zM104 519h1v1h-1zM211 485h1v1h-1zM304 506h1v1h-1zM589 492h1v1h-1zM170 524h1v1h-1zM204 505h1v1h-1zM596 510h1v1h-1zM532 470h1v1h-1zM441 480h1v1h-1zM242 509h1v1h-1zM775 503h1v1h-1zM458 467h1v1h-1zM308 526h1v1h-1zM144 536h1v1h-1zM409 509h1v1h-1zM148 525h1v1h-1zM188 520h1v1h-1zM364 477h1v1h-1zM750 477h1v1h-1zM372 482h1v1h-1zM596 475h1v1h-1zM222 475h1v1h-1zM506 495h1v1h-1zM388 517h1v1h-1zM457 480h1v1h-1zM192 520h1v1h-1zM724 494h1v1h-1zM591 474h1v1h-1zM68 493h1v1h-1zM611 527h1v1h-1zM553 505h1v1h-1zM304 514h1v1h-1zM370 490h1v1h-1zM567 501h1v1h-1zM583 486h1v1h-1zM631 503h1v1h-1zM398 478h1v1h-1zM61 489h1v1h-1zM292 506h1v1h-1zM421 504h1v1h-1zM216 523h1v1h-1zM189 503h1v1h-1zM382 487h1v1h-1zM110 476h1v1h-1zM238 518h1v1h-1zM266 490h1v1h-1zM87 517h1v1h-1zM60 518h1v1h-1zM307 524h1v1h-1zM446 511h1v1h-1zM150 525h1v1h-1zM255 542h1v1h-1zM79 524h1v1h-1zM582 480h1v1h-1zM647 484h1v1h-1zM310 530h1v1h-1zM152 503h1v1h-1zM594 498h1v1h-1zM411 488h1v1h-1zM99 527h1v1h-1zM327 505h1v1h-1zM193 542h1v1h-1zM402 510h1v1h-1zM301 487h1v1h-1zM549 523h1v1h-1zM665 455h1v1h-1zM614 503h1v1h-1zM360 514h1v1h-1zM218 487h1v1h-1zM70 496h1v1h-1zM347 521h1v1h-1zM121 542h1v1h-1zM291 495h1v1h-1zM311 488h1v1h-1zM367 499h1v1h-1zM179 518h1v1h-1zM492 477h1v1h-1zM103 525h1v1h-1zM300 511h1v1h-1zM581 477h1v1h-1zM452 507h1v1h-1zM222 537h1v1h-1zM537 523h1v1h-1zM489 495h1v1h-1zM533 504h1v1h-1zM69 507h1v1h-1zM113 474h1v1h-1zM175 498h1v1h-1zM81 520h1v1h-1zM285 482h1v1h-1zM244 532h1v1h-1zM162 507h1v1h-1zM356 506h1v1h-1zM449 482h1v1h-1zM310 491h1v1h-1zM291 512h1v1h-1zM224 487h1v1h-1zM420 505h1v1h-1zM553 456h1v1h-1zM239 492h1v1h-1zM235 491h1v1h-1zM523 488h1v1h-1zM65 523h1v1h-1zM417 510h1v1h-1zM561 503h1v1h-1zM147 526h1v1h-1zM263 482h1v1h-1zM291 539h1v1h-1zM163 513h1v1h-1zM399 482h1v1h-1zM414 509h1v1h-1zM345 490h1v1h-1zM91 491h1v1h-1zM709 504h1v1h-1zM615 473h1v1h-1zM351 501h1v1h-1zM125 509h1v1h-1zM295 515h1v1h-1zM183 496h1v1h-1zM96 497h1v1h-1zM93 541h1v1h-1zM389 482h1v1h-1zM445 500h1v1h-1zM606 470h1v1h-1zM465 490h1v1h-1zM482 506h1v1h-1zM91 496h1v1h-1zM719 514h1v1h-1zM773 479h1v1h-1zM609 471h1v1h-1zM114 498h1v1h-1zM547 503h1v1h-1zM497 503h1v1h-1zM154 486h1v1h-1zM391 480h1v1h-1zM362 477h1v1h-1zM303 499h1v1h-1zM573 494h1v1h-1zM356 492h1v1h-1zM77 508h1v1h-1zM235 500h1v1h-1zM393 476h1v1h-1zM408 506h1v1h-1zM151 518h1v1h-1zM611 485h1v1h-1zM213 516h1v1h-1zM428 503h1v1h-1zM372 489h1v1h-1zM81 489h1v1h-1zM250 494h1v1h-1zM169 528h1v1h-1zM637 494h1v1h-1zM333 486h1v1h-1zM689 507h1v1h-1zM507 465h1v1h-1zM489 535h1v1h-1zM306 506h1v1h-1zM159 520h1v1h-1zM489 508h1v1h-1zM487 486h1v1h-1zM171 492h1v1h-1zM638 496h1v1h-1zM648 499h1v1h-1zM587 516h1v1h-1zM128 501h1v1h-1zM474 496h1v1h-1zM573 484h1v1h-1zM399 537h1v1h-1zM225 498h1v1h-1zM137 498h1v1h-1zM115 511h1v1h-1zM157 492h1v1h-1zM482 513h1v1h-1zM136 511h1v1h-1zM89 485h1v1h-1zM262 466h1v1h-1zM375 505h1v1h-1zM56 488h1v1h-1zM421 492h1v1h-1zM73 546h1v1h-1zM59 496h1v1h-1zM217 517h1v1h-1zM293 506h1v1h-1zM217 535h1v1h-1zM437 490h1v1h-1zM121 493h1v1h-1zM209 510h1v1h-1zM630 493h1v1h-1zM204 491h1v1h-1zM625 470h1v1h-1zM838 449h1v1h-1zM847 457h1v1h-1zM183 528h1v1h-1zM238 511h1v1h-1zM231 497h1v1h-1zM391 524h1v1h-1zM698 471h1v1h-1zM55 492h1v1h-1zM127 494h1v1h-1zM240 493h1v1h-1zM385 489h1v1h-1zM355 499h1v1h-1zM210 522h1v1h-1zM313 500h1v1h-1zM300 484h1v1h-1zM196 493h1v1h-1zM125 518h1v1h-1zM247 523h1v1h-1zM55 509h1v1h-1zM126 486h1v1h-1zM677 488h1v1h-1zM414 518h1v1h-1zM625 511h1v1h-1zM331 511h1v1h-1zM454 497h1v1h-1zM161 508h1v1h-1zM211 505h1v1h-1zM180 474h1v1h-1zM480 489h1v1h-1zM291 482h1v1h-1zM299 501h1v1h-1zM130 501h1v1h-1zM161 525h1v1h-1zM370 512h1v1h-1zM113 505h1v1h-1zM388 537h1v1h-1zM497 529h1v1h-1zM320 525h1v1h-1zM96 527h1v1h-1zM318 502h1v1h-1zM158 471h1v1h-1zM458 508h1v1h-1zM547 491h1v1h-1zM202 506h1v1h-1zM100 493h1v1h-1zM69 488h1v1h-1zM327 511h1v1h-1zM276 512h1v1h-1zM122 521h1v1h-1zM400 495h1v1h-1zM172 487h1v1h-1zM329 480h1v1h-1zM443 501h1v1h-1zM467 521h1v1h-1zM672 477h1v1h-1zM166 516h1v1h-1zM143 526h1v1h-1zM286 497h1v1h-1zM690 503h1v1h-1zM744 518h1v1h-1zM181 511h1v1h-1zM419 489h1v1h-1zM570 497h1v1h-1zM186 485h1v1h-1zM551 473h1v1h-1zM264 493h1v1h-1zM531 484h1v1h-1zM130 498h1v1h-1zM77 518h1v1h-1zM306 504h1v1h-1zM170 522h1v1h-1zM721 465h1v1h-1zM310 505h1v1h-1zM822 467h1v1h-1zM475 510h1v1h-1zM449 522h1v1h-1zM253 481h1v1h-1zM272 512h1v1h-1zM192 514h1v1h-1zM347 504h1v1h-1zM217 498h1v1h-1zM67 509h1v1h-1zM149 523h1v1h-1zM438 510h1v1h-1zM423 471h1v1h-1zM423 513h1v1h-1zM123 512h1v1h-1zM659 466h1v1h-1zM733 481h1v1h-1zM372 515h1v1h-1zM193 477h1v1h-1zM781 523h1v1h-1zM586 493h1v1h-1zM167 488h1v1h-1zM373 487h1v1h-1zM349 506h1v1h-1zM146 497h1v1h-1zM175 474h1v1h-1zM125 501h1v1h-1zM170 507h1v1h-1zM113 512h1v1h-1zM90 519h1v1h-1zM321 512h1v1h-1zM340 489h1v1h-1zM286 509h1v1h-1zM229 532h1v1h-1zM650 478h1v1h-1zM96 495h1v1h-1zM123 509h1v1h-1zM162 503h1v1h-1zM130 515h1v1h-1zM824 461h1v1h-1zM141 494h1v1h-1zM160 503h1v1h-1zM771 465h1v1h-1zM488 497h1v1h-1zM271 488h1v1h-1zM464 492h1v1h-1zM84 495h1v1h-1zM71 486h1v1h-1zM448 505h1v1h-1zM85 503h1v1h-1zM109 496h1v1h-1zM202 486h1v1h-1zM264 509h1v1h-1zM277 506h1v1h-1zM220 520h1v1h-1zM547 498h1v1h-1zM231 537h1v1h-1zM141 507h1v1h-1zM266 523h1v1h-1zM138 508h1v1h-1zM217 489h1v1h-1zM318 511h1v1h-1zM352 516h1v1h-1zM424 479h1v1h-1zM456 509h1v1h-1zM503 506h1v1h-1zM413 505h1v1h-1zM491 508h1v1h-1zM362 507h1v1h-1zM275 517h1v1h-1zM57 489h1v1h-1zM319 529h1v1h-1zM82 510h1v1h-1zM530 514h1v1h-1zM388 519h1v1h-1zM476 492h1v1h-1zM720 473h1v1h-1zM520 485h1v1h-1zM415 506h1v1h-1zM521 508h1v1h-1zM499 513h1v1h-1zM351 504h1v1h-1zM521 484h1v1h-1zM104 520h1v1h-1zM566 506h1v1h-1zM57 518h1v1h-1zM324 479h1v1h-1zM243 494h1v1h-1zM748 483h1v1h-1zM285 521h1v1h-1zM410 515h1v1h-1zM91 545h1v1h-1zM178 523h1v1h-1zM541 492h1v1h-1zM527 491h1v1h-1zM250 503h1v1h-1zM324 514h1v1h-1zM402 512h1v1h-1zM207 507h1v1h-1zM160 488h1v1h-1zM562 490h1v1h-1zM56 494h1v1h-1zM856 483h1v1h-1zM417 480h1v1h-1zM539 497h1v1h-1zM212 519h1v1h-1zM358 478h1v1h-1zM271 514h1v1h-1zM124 493h1v1h-1zM431 483h1v1h-1zM684 467h1v1h-1zM353 494h1v1h-1zM382 489h1v1h-1zM209 510h1v1h-1zM158 501h1v1h-1zM478 529h1v1h-1zM254 492h1v1h-1zM210 477h1v1h-1zM566 474h1v1h-1zM130 535h1v1h-1zM109 531h1v1h-1zM410 478h1v1h-1zM289 502h1v1h-1zM207 508h1v1h-1zM406 482h1v1h-1zM199 485h1v1h-1zM398 510h1v1h-1zM314 497h1v1h-1zM451 503h1v1h-1zM477 487h1v1h-1zM429 475h1v1h-1zM116 513h1v1h-1zM333 493h1v1h-1zM517 514h1v1h-1zM594 499h1v1h-1zM670 502h1v1h-1zM329 485h1v1h-1zM93 502h1v1h-1zM199 496h1v1h-1zM473 501h1v1h-1zM277 502h1v1h-1zM232 527h1v1h-1zM104 495h1v1h-1zM629 471h1v1h-1zM381 486h1v1h-1zM496 490h1v1h-1zM93 538h1v1h-1zM439 477h1v1h-1zM232 492h1v1h-1zM309 517h1v1h-1zM739 510h1v1h-1zM270 519h1v1h-1zM62 495h1v1h-1zM227 494h1v1h-1zM632 528h1v1h-1zM571 478h1v1h-1zM247 523h1v1h-1zM172 506h1v1h-1zM142 505h1v1h-1zM282 534h1v1h-1zM111 516h1v1h-1zM125 531h1v1h-1zM469 477h1v1h-1zM654 448h1v1h-1zM543 486h1v1h-1zM57 526h1v1h-1zM324 512h1v1h-1zM517 533h1v1h-1zM245 521h1v1h-1zM376 510h1v1h-1zM400 515h1v1h-1zM186 490h1v1h-1zM341 508h1v1h-1zM443 512h1v1h-1zM57 503h1v1h-1zM223 486h1v1h-1zM600 499h1v1h-1zM473 506h1v1h-1zM576 509h1v1h-1zM373 496h1v1h-1zM624 480h1v1h-1zM240 487h1v1h-1zM104 513h1v1h-1zM268 500h1v1h-1zM152 522h1v1h-1zM335 518h1v1h-1zM823 460h1v1h-1zM420 505h1v1h-1zM669 490h1v1h-1zM100 500h1v1h-1zM331 511h1v1h-1zM245 501h1v1h-1zM551 514h1v1h-1zM231 529h1v1h-1zM218 519h1v1h-1zM101 540h1v1h-1zM584 515h1v1h-1z"/><path fill="#ff0000" d="M304 541h1v1h-1zM786 503h1v1h-1zM244 501h1v1h-1zM400 508h1v1h-1zM359 485h1v1h-1zM244 520h1v1h-1zM106 553h1v1h-1zM288 499h1v1h-1zM448 531h1v1h-1zM529 498h1v1h-1zM92 554h1v1h-1zM520 500h1v1h-1zM275 482h1v1h-1zM436 543h1v1h-1zM372 527h1v1h-1zM335 492h1v1h-1zM439 482h1v1h-1zM212 527h1v1h-1zM390 535h1v1h-1zM464 479h1v1h-1zM839 465h1v1h-1zM413 474h1v1h-1zM316 513h1v1h-1zM460 492h1v1h-1zM398 482h1v1h-1zM684 497h1v1h-1zM170 540h1v1h-1zM236 539h1v1h-1zM187 500h1v1h-1zM180 531h1v1h-1zM211 534h1v1h-1zM745 535h1v1h-1zM312 521h1v1h-1zM602 534h1v1h-1zM122 491h1v1h-1zM76 512h1v1h-1zM251 539h1v1h-1zM144 510h1v1h-1zM246 487h1v1h-1zM123 511h1v1h-1zM658 486h1v1h-1zM746 527h1v1h-1zM199 511h1v1h-1zM454 521h1v1h-1zM685 538h1v1h-1zM526 529h1v1h-1zM245 544h1v1h-1zM226 526h1v1h-1zM754 504h1v1h-1zM557 498h1v1h-1zM639 455h1v1h-1zM481 518h1v1h-1zM87 471h1v1h-1zM165 529h1v1h-1zM338 485h1v1h-1zM309 534h1v1h-1zM731 519h1v1h-1zM440 492h1v1h-1zM517 484h1v1h-1zM59 525h1v1h-1zM303 536h1v1h-1zM257 533h1v1h-1zM620 467h1v1h-1zM355 532h1v1h-1zM647 514h1v1h-1zM414 490h1v1h-1zM331 485h1v1h-1zM593 478h1v1h-1zM174 533h1v1h-1zM478 510h1v1h-1zM218 503h1v1h-1zM405 503h1v1h-1zM641 490h1v1h-1zM696 533h1v1h-1zM217 528h1v1h-1zM445 504h1v1h-1zM457 537h1v1h-1zM673 475h1v1h-1zM741 533h1v1h-1zM763 444h1v1h-1zM410 481h1v1h-1zM106 507h1v1h-1zM56 513h1v1h-1zM291 503h1v1h-1zM215 522h1v1h-1zM282 523h1v1h-1zM80 507h1v1h-1zM534 529h1v1h-1zM663 443h1v1h-1zM144 537h1v1h-1zM88 512h1v1h-1zM361 484h1v1h-1zM484 521h1v1h-1zM400 518h1v1h-1zM321 527h1v1h-1zM198 509h1v1h-1zM494 492h1v1h-1zM382 486h1v1h-1zM183 486h1v1h-1zM61 469h1v1h-1zM250 524h1v1h-1zM141 512h1v1h-1zM362 514h1v1h-1zM276 499h1v1h-1zM87 495h1v1h-1zM572 526h1v1h-1zM713 496h1v1h-1zM225 508h1v1h-1zM847 514h1v1h-1zM318 550h1v1h-1zM297 479h1v1h-1zM263 526h1v1h-1zM720 509h1v1h-1zM217 513h1v1h-1zM331 495h1v1h-1zM462 476h1v1h-1zM416 521h1v1h-1zM466 527h1v1h-1zM155 542h1v1h-1zM391 504h1v1h-1zM96 531h1v1h-1zM252 500h1v1h-1zM61 500h1v1h-1zM356 478h1v1h-1zM285 512h1v1h-1zM211 529h1v1h-1zM59 540h1v1h-1zM153 493h1v1h-1zM587 491h1v1h-1zM271 493h1v1h-1zM416 529h1v1h-1zM327 488h1v1h-1zM476 542h1v1h-1zM468 482h1v1h-1zM217 492h1v1h-1zM639 497h1v1h-1zM464 474h1v1h-1zM320 504h1v1h-1zM304 488h1v1h-1zM468 477h1v1h-1zM193 504h1v1h-1zM688 490h1v1h-1zM306 488h1v1h-1zM240 545h1v1h-1zM70 487h1v1h-1zM562 471h1v1h-1zM69 529h1v1h-1zM446 496h1v1h-1zM247 548h1v1h-1zM116 508h1v1h-1zM61 541h1v1h-1zM125 524h1v1h-1zM162 485h1v1h-1zM71 530h1v1h-1zM295 513h1v1h-1zM129 535h1v1h-1zM600 529h1v1h-1zM231 532h1v1h-1zM125 541h1v1h-1zM78 487h1v1h-1zM540 521h1v1h-1zM233 475h1v1h-1zM373 482h1v1h-1zM274 533h1v1h-1zM332 490h1v1h-1zM543 493h1v1h-1zM166 522h1v1h-1zM321 507h1v1h-1zM167 461h1v1h-1zM586 484h1v1h-1zM233 538h1v1h-1zM445 531h1v1h-1zM76 553h1v1h-1zM93 507h1v1h-1zM465 525h1v1h-1zM179 537h1v1h-1zM82 537h1v1h-1zM433 513h1v1h-1zM321 501h1v1h-1zM185 512h1v1h-1zM358 543h1v1h-1zM370 526h1v1h-1zM144 500h1v1h-1zM371 543h1v1h-1zM492 492h1v1h-1zM742 520h1v1h-1zM738 503h1v1h-1zM234 487h1v1h-1zM285 499h1v1h-1zM316 509h1v1h-1zM348 538h1v1h-1zM230 506h1v1h-1zM83 541h1v1h-1zM100 510h1v1h-1zM554 493h1v1h-1zM427 476h1v1h-1zM375 520h1v1h-1zM268 551h1v1h-1zM333 513h1v1h-1zM197 517h1v1h-1zM107 508h1v1h-1zM322 485h1v1h-1zM484 465h1v1h-1zM86 542h1v1h-1zM188 553h1v1h-1zM436 508h1v1h-1zM806 509h1v1h-1zM567 511h1v1h-1zM311 483h1v1h-1zM436 505h1v1h-1zM864 494h1v1h-1zM476 491h1v1h-1zM335 524h1v1h-1zM307 541h1v1h-1zM780 500h1v1h-1zM709 486h1v1h-1zM456 496h1v1h-1zM133 497h1v1h-1zM353 490h1v1h-1zM368 487h1v1h-1zM423 497h1v1h-1zM758 484h1v1h-1zM561 470h1v1h-1zM197 486h1v1h-1zM126 479h1v1h-1zM296 546h1v1h-1zM195 544h1v1h-1zM339 507h1v1h-1zM269 506h1v1h-1zM342 530h1v1h-1zM314 487h1v1h-1zM504 539h1v1h-1zM265 492h1v1h-1zM517 510h1v1h-1zM160 533h1v1h-1zM345 491h1v1h-1zM125 526h1v1h-1zM655 485h1v1h-1zM453 537h1v1h-1zM789 507h1v1h-1zM78 524h1v1h-1zM183 541h1v1h-1zM400 499h1v1h-1zM802 496h1v1h-1zM196 490h1v1h-1zM785 510h1v1h-1zM383 520h1v1h-1zM112 515h1v1h-1zM645 534h1v1h-1zM219 532h1v1h-1zM82 522h1v1h-1zM549 481h1v1h-1zM229 526h1v1h-1zM305 514h1v1h-1zM349 523h1v1h-1zM735 499h1v1h-1zM229 484h1v1h-1zM254 483h1v1h-1zM120 533h1v1h-1zM610 499h1v1h-1zM277 508h1v1h-1zM315 494h1v1h-1zM300 532h1v1h-1zM229 483h1v1h-1zM286 545h1v1h-1zM654 513h1v1h-1zM146 539h1v1h-1zM403 506h1v1h-1zM463 529h1v1h-1zM516 517h1v1h-1zM90 491h1v1h-1zM247 497h1v1h-1zM721 476h1v1h-1zM191 487h1v1h-1zM217 539h1v1h-1zM195 488h1v1h-1zM197 504h1v1h-1zM659 510h1v1h-1zM463 529h1v1h-1zM67 502h1v1h-1zM378 509h1v1h-1zM315 492h1v1h-1zM194 535h1v1h-1zM733 536h1v1h-1zM242 529h1v1h-1zM231 494h1v1h-1zM63 524h1v1h-1zM431 535h1v1h-1zM257 491h1v1h-1zM111 530h1v1h-1zM294 547h1v1h-1zM202 497h1v1h-1zM118 547h1v1h-1zM305 492h1v1h-1zM316 530h1v1h-1zM505 511h1v1h-1zM379 535h1v1h-1zM119 485h1v1h-1zM442 542h1v1h-1zM719 463h1v1h-1zM556 477h1v1h-1zM411 530h1v1h-1zM611 491h1v1h-1zM814 489h1v1h-1zM574 493h1v1h-1zM506 507h1v1h-1zM284 510h1v1h-1zM623 539h1v1h-1zM299 512h1v1h-1zM290 488h1v1h-1zM614 470h1v1h-1zM336 508h1v1h-1zM489 490h1v1h-1zM147 498h1v1h-1zM185 542h1v1h-1zM442 484h1v1h-1zM354 491h1v1h-1zM237 515h1v1h-1zM650 491h1v1h-1zM408 464h1v1h-1zM355 516h1v1h-1zM113 491h1v1h-1zM271 551h1v1h-1zM218 536h1v1h-1zM106 502h1v1h-1zM280 489h1v1h-1zM214 511h1v1h-1zM704 535h1v1h-1zM381 524h1v1h-1zM604 514h1v1h-1zM506 495h1v1h-1zM366 500h1v1h-1zM405 525h1v1h-1zM74 548h1v1h-1zM301 498h1v1h-1zM667 467h1v1h-1zM117 490h1v1h-1zM292 493h1v1h-1zM266 504h1v1h-1zM357 523h1v1h-1zM312 542h1v1h-1zM593 506h1v1h-1zM215 489h1v1h-1zM240 535h1v1h-1zM144 550h1v1h-1zM73 537h1v1h-1zM276 500h1v1h-1zM365 523h1v1h-1zM687 524h1v1h-1zM510 529h1v1h-1zM290 532h1v1h-1zM338 502h1v1h-1zM388 478h1v1h-1zM575 498h1v1h-1zM218 542h1v1h-1zM181 535h1v1h-1zM416 494h1v1h-1zM260 495h1v1h-1zM249 488h1v1h-1zM532 506h1v1h-1zM73 549h1v1h-1zM273 545h1v1h-1zM199 508h1v1h-1zM766 477h1v1h-1zM249 498h1v1h-1zM598 518h1v1h-1zM304 483h1v1h-1zM395 480h1v1h-1zM122 470h1v1h-1zM396 505h1v1h-1zM323 549h1v1h-1zM92 497h1v1h-1zM691 533h1v1h-1zM646 531h1v1h-1zM626 496h1v1h-1zM176 482h1v1h-1zM672 538h1v1h-1zM360 520h1v1h-1zM434 487h1v1h-1zM274 539h1v1h-1zM325 511h1v1h-1zM541 472h1v1h-1zM365 518h1v1h-1zM257 520h1v1h-1zM55 542h1v1h-1zM518 445h1v1h-1zM246 513h1v1h-1zM393 523h1v1h-1zM78 539h1v1h-1zM270 502h1v1h-1zM155 483h1v1h-1zM131 532h1v1h-1zM250 536h1v1h-1zM147 493h1v1h-1zM141 524h1v1h-1zM265 529h1v1h-1zM87 514h1v1h-1zM86 522h1v1h-1zM498 524h1v1h-1zM202 532h1v1h-1zM586 489h1v1h-1zM501 505h1v1h-1zM194 479h1v1h-1zM82 501h1v1h-1zM66 504h1v1h-1zM739 462h1v1h-1zM394 540h1v1h-1zM144 487h1v1h-1zM454 495h1v1h-1zM420 509h1v1h-1zM604 532h1v1h-1zM266 522h1v1h-1zM202 520h1v1h-1zM766 534h1v1h-1zM279 493h1v1h-1zM394 520h1v1h-1zM503 537h1v1h-1zM101 529h1v1h-1zM90 526h1v1h-1zM107 530h1v1h-1zM505 515h1v1h-1zM59 509h1v1h-1zM494 479h1v1h-1zM245 514h1v1h-1zM359 509h1v1h-1zM56 549h1v1h-1zM661 507h1v1h-1zM102 491h1v1h-1zM419 514h1v1h-1zM55 540h1v1h-1zM329 529h1v1h-1zM518 500h1v1h-1zM407 484h1v1h-1zM347 533h1v1h-1zM198 487h1v1h-1zM72 495h1v1h-1zM184 497h1v1h-1zM408 479h1v1h-1zM694 499h1v1h-1zM469 496h1v1h-1zM155 542h1v1h-1zM148 533h1v1h-1zM424 530h1v1h-1zM98 554h1v1h-1zM434 482h1v1h-1zM494 521h1v1h-1zM127 539h1v1h-1zM704 488h1v1h-1zM73 509h1v1h-1zM691 519h1v1h-1zM356 539h1v1h-1zM564 497h1v1h-1zM237 494h1v1h-1zM290 542h1v1h-1zM311 526h1v1h-1zM741 524h1v1h-1zM248 513h1v1h-1zM201 523h1v1h-1zM224 540h1v1h-1zM115 535h1v1h-1zM594 489h1v1h-1zM542 504h1v1h-1zM485 496h1v1h-1zM522 491h1v1h-1zM577 485h1v1h-1zM561 499h1v1h-1zM331 527h1v1h-1zM308 486h1v1h-1zM277 503h1v1h-1zM452 499h1v1h-1zM740 474h1v1h-1zM144 489h1v1h-1zM251 545h1v1h-1zM433 518h1v1h-1zM503 474h1v1h-1zM403 495h1v1h-1zM191 498h1v1h-1zM285 519h1v1h-1zM519 540h1v1h-1zM494 514h1v1h-1zM519 485h1v1h-1zM117 550h1v1h-1zM195 499h1v1h-1zM166 525h1v1h-1zM179 518h1v1h-1zM550 523h1v1h-1zM164 486h1v1h-1zM358 501h1v1h-1zM262 551h1v1h-1zM741 465h1v1h-1zM208 524h1v1h-1zM324 547h1v1h-1zM661 507h1v1h-1zM392 485h1v1h-1zM63 491h1v1h-1zM186 545h1v1h-1zM284 517h1v1h-1zM94 524h1v1h-1zM519 470h1v1h-1zM371 505h1v1h-1zM77 490h1v1h-1zM164 497h1v1h-1zM150 524h1v1h-1zM413 519h1v1h-1zM129 528h1v1h-1zM522 516h1v1h-1zM305 549h1v1h-1zM438 520h1v1h-1zM305 487h1v1h-1zM241 522h1v1h-1zM287 513h1v1h-1zM295 519h1v1h-1zM335 539h1v1h-1zM561 495h1v1h-1zM530 469h1v1h-1zM149 526h1v1h-1zM82 557h1v1h-1zM209 482h1v1h-1zM119 522h1v1h-1zM334 531h1v1h-1zM635 514h1v1h-1zM394 519h1v1h-1zM299 483h1v1h-1zM511 474h1v1h-1zM702 468h1v1h-1zM432 505h1v1h-1zM445 514h1v1h-1zM461 472h1v1h-1zM302 498h1v1h-1zM308 510h1v1h-1zM431 546h1v1h-1zM322 482h1v1h-1zM567 536h1v1h-1zM514 500h1v1h-1zM691 485h1v1h-1zM312 519h1v1h-1zM329 491h1v1h-1zM130 553h1v1h-1zM198 488h1v1h-1zM428 470h1v1h-1zM611 518h1v1h-1zM674 535h1v1h-1zM67 538h1v1h-1zM494 488h1v1h-1zM434 532h1v1h-1zM169 537h1v1h-1zM447 514h1v1h-1zM511 495h1v1h-1zM155 487h1v1h-1zM592 525h1v1h-1zM234 532h1v1h-1zM116 548h1v1h-1zM154 510h1v1h-1zM643 510h1v1h-1zM486 516h1v1h-1zM81 507h1v1h-1zM201 509h1v1h-1zM421 512h1v1h-1zM170 544h1v1h-1zM98 555h1v1h-1zM612 518h1v1h-1zM244 535h1v1h-1zM370 505h1v1h-1zM413 480h1v1h-1zM142 537h1v1h-1zM279 512h1v1h-1zM208 543h1v1h-1zM318 494h1v1h-1zM428 529h1v1h-1zM80 494h1v1h-1zM557 520h1v1h-1zM73 499h1v1h-1zM83 553h1v1h-1zM659 499h1v1h-1zM184 470h1v1h-1zM161 547h1v1h-1zM560 540h1v1h-1zM221 496h1v1h-1zM199 525h1v1h-1zM301 521h1v1h-1zM581 454h1v1h-1zM125 463h1v1h-1zM122 524h1v1h-1zM267 486h1v1h-1zM57 508h1v1h-1zM323 478h1v1h-1zM682 509h1v1h-1zM76 483h1v1h-1zM535 520h1v1h-1zM602 491h1v1h-1zM281 491h1v1h-1zM79 494h1v1h-1zM346 516h1v1h-1zM495 539h1v1h-1zM68 486h1v1h-1zM506 530h1v1h-1zM295 511h1v1h-1zM106 554h1v1h-1zM68 493h1v1h-1zM281 493h1v1h-1zM356 487h1v1h-1zM504 534h1v1h-1zM132 555h1v1h-1zM338 537h1v1h-1zM535 502h1v1h-1zM355 475h1v1h-1zM377 548h1v1h-1zM620 493h1v1h-1zM690 512h1v1h-1zM184 491h1v1h-1zM442 476h1v1h-1zM315 541h1v1h-1zM341 528h1v1h-1zM390 495h1v1h-1zM577 523h1v1h-1zM749 466h1v1h-1zM379 490h1v1h-1zM79 525h1v1h-1zM114 541h1v1h-1zM522 472h1v1h-1zM455 516h1v1h-1zM594 537h1v1h-1zM84 533h1v1h-1zM62 485h1v1h-1zM186 512h1v1h-1zM80 550h1v1h-1zM577 537h1v1h-1zM595 530h1v1h-1zM219 535h1v1h-1zM234 479h1v1h-1zM428 539h1v1h-1zM115 510h1v1h-1zM382 490h1v1h-1zM337 524h1v1h-1zM237 531h1v1h-1zM294 509h1v1h-1zM869 524h1v1h-1zM752 511h1v1h-1zM551 503h1v1h-1zM269 540h1v1h-1zM783 524h1v1h-1zM337 499h1v1h-1zM115 517h1v1h-1zM374 547h1v1h-1zM347 483h1v1h-1zM610 505h1v1h-1zM148 553h1v1h-1zM301 535h1v1h-1zM192 540h1v1h-1zM207 477h1v1h-1zM221 501h1v1h-1zM142 526h1v1h-1zM337 518h1v1h-1zM634 532h1v1h-1zM427 490h1v1h-1zM124 524h1v1h-1zM146 535h1v1h-1zM560 472h1v1h-1zM169 548h1v1h-1zM137 535h1v1h-1zM419 538h1v1h-1zM144 516h1v1h-1zM207 479h1v1h-1zM670 465h1v1h-1zM652 477h1v1h-1zM680 495h1v1h-1zM508 533h1v1h-1zM234 495h1v1h-1zM201 525h1v1h-1zM472 534h1v1h-1zM707 497h1v1h-1zM156 493h1v1h-1zM541 500h1v1h-1zM55 517h1v1h-1zM566 470h1v1h-1zM56 464h1v1h-1zM204 488h1v1h-1zM249 539h1v1h-1zM510 496h1v1h-1zM109 555h1v1h-1zM296 496h1v1h-1zM234 513h1v1h-1zM767 488h1v1h-1zM261 488h1v1h-1zM461 516h1v1h-1zM614 465h1v1h-1zM85 498h1v1h-1zM374 523h1v1h-1zM523 518h1v1h-1zM315 483h1v1h-1zM641 448h1v1h-1zM114 513h1v1h-1zM529 475h1v1h-1zM113 504h1v1h-1zM252 484h1v1h-1zM196 485h1v1h-1zM755 476h1v1h-1zM267 526h1v1h-1zM772 495h1v1h-1zM76 544h1v1h-1zM536 544h1v1h-1zM615 521h1v1h-1zM406 543h1v1h-1zM334 526h1v1h-1zM401 518h1v1h-1zM573 515h1v1h-1zM622 481h1v1h-1zM127 527h1v1h-1zM321 538h1v1h-1zM648 498h1v1h-1zM61 509h1v1h-1zM446 511h1v1h-1zM412 512h1v1h-1zM679 516h1v1h-1zM222 528h1v1h-1zM479 541h1v1h-1zM677 492h1v1h-1zM364 490h1v1h-1zM610 501h1v1h-1zM70 535h1v1h-1zM412 516h1v1h-1zM300 528h1v1h-1zM405 514h1v1h-1zM547 514h1v1h-1zM469 532h1v1h-1zM634 539h1v1h-1zM595 510h1v1h-1zM385 475h1v1h-1zM432 495h1v1h-1zM394 510h1v1h-1zM75 556h1v1h-1zM125 475h1v1h-1zM163 484h1v1h-1zM578 498h1v1h-1zM54 519h1v1h-1zM91 506h1v1h-1zM85 521h1v1h-1zM225 534h1v1h-1zM113 543h1v1h-1zM80 527h1v1h-1zM85 513h1v1h-1zM331 527h1v1h-1zM507 521h1v1h-1zM352 506h1v1h-1zM246 490h1v1h-1zM395 500h1v1h-1zM116 520h1v1h-1zM478 476h1v1h-1zM79 517h1v1h-1zM258 549h1v1h-1zM326 489h1v1h-1zM69 555h1v1h-1zM395 524h1v1h-1zM130 546h1v1h-1zM479 475h1v1h-1zM252 484h1v1h-1zM200 497h1v1h-1zM54 514h1v1h-1zM492 492h1v1h-1zM94 502h1v1h-1zM126 501h1v1h-1zM705 484h1v1h-1zM188 525h1v1h-1zM321 547h1v1h-1zM96 549h1v1h-1zM332 538h1v1h-1zM502 517h1v1h-1zM442 534h1v1h-1zM340 546h1v1h-1zM235 542h1v1h-1zM225 512h1v1h-1zM181 521h1v1h-1zM153 510h1v1h-1zM171 519h1v1h-1zM850 462h1v1h-1zM688 484h1v1h-1zM502 491h1v1h-1zM56 522h1v1h-1zM142 502h1v1h-1zM259 490h1v1h-1zM684 485h1v1h-1zM503 525h1v1h-1zM667 507h1v1h-1zM138 510h1v1h-1zM228 491h1v1h-1zM222 552h1v1h-1zM128 522h1v1h-1zM592 503h1v1h-1zM82 534h1v1h-1zM250 549h1v1h-1zM94 547h1v1h-1zM163 533h1v1h-1zM300 481h1v1h-1zM495 452h1v1h-1zM441 478h1v1h-1zM418 505h1v1h-1zM369 480h1v1h-1zM817 526h1v1h-1zM837 505h1v1h-1zM565 488h1v1h-1zM181 535h1v1h-1zM141 548h1v1h-1zM478 537h1v1h-1zM427 496h1v1h-1zM564 532h1v1h-1zM125 486h1v1h-1zM604 475h1v1h-1zM782 504h1v1h-1zM482 488h1v1h-1zM490 504h1v1h-1zM205 542h1v1h-1zM845 457h1v1h-1zM146 525h1v1h-1zM520 469h1v1h-1zM323 515h1v1h-1zM620 510h1v1h-1zM246 487h1v1h-1zM470 499h1v1h-1zM318 512h1v1h-1zM360 530h1v1h-1z"/><path fill="#ffff00" d="M846 515h1v1h-1zM76 505h1v1h-1zM100 516h1v1h-1zM331 551h1v1h-1zM302 512h1v1h-1zM175 553h1v1h-1zM733 461h1v1h-1zM263 508h1v1h-1zM492 512h1v1h-1zM288 491h1v1h-1zM72 545h1v1h-1zM84 497h1v1h-1zM577 525h1v1h-1zM531 471h1v1h-1zM558 491h1v1h-1zM232 498h1v1h-1zM319 510h1v1h-1zM102 494h1v1h-1zM630 520h1v1h-1zM321 523h1v1h-1zM383 520h1v1h-1zM126 514h1v1h-1zM632 524h1v1h-1zM242 522h1v1h-1zM439 505h1v1h-1zM89 542h1v1h-1zM271 508h1v1h-1zM566 487h1v1h-1zM97 505h1v1h-1zM354 482h1v1h-1zM439 535h1v1h-1zM326 497h1v1h-1zM644 522h1v1h-1zM294 534h1v1h-1zM290 515h1v1h-1zM426 546h1v1h-1zM447 471h1v1h-1zM94 492h1v1h-1zM93 553h1v1h-1zM337 545h1v1h-1zM240 499h1v1h-1zM90 504h1v1h-1zM93 504h1v1h-1zM586 498h1v1h-1zM98 491h1v1h-1zM118 546h1v1h-1zM73 521h1v1h-1zM742 519h1v1h-1zM246 521h1v1h-1zM752 482h1v1h-1zM265 492h1v1h-1zM497 513h1v1h-1zM55 511h1v1h-1zM252 550h1v1h-1zM346 495h1v1h-1zM115 533h1v1h-1zM330 493h1v1h-1zM125 496h1v1h-1zM238 535h1v1h-1zM151 485h1v1h-1zM246 505h1v1h-1zM583 527h1v1h-1zM265 502h1v1h-1zM188 545h1v1h-1zM300 510h1v1h-1zM817 490h1v1h-1zM238 500h1v1h-1zM73 504h1v1h-1zM253 467h1v1h-1zM363 489h1v1h-1zM396 538h1v1h-1zM235 505h1v1h-1zM338 487h1v1h-1zM697 527h1v1h-1zM277 499h1v1h-1zM99 539h1v1h-1zM228 516h1v1h-1zM521 484h1v1h-1zM430 529h1v1h-1zM98 551h1v1h-1zM208 506h1v1h-1zM256 552h1v1h-1zM220 500h1v1h-1zM455 493h1v1h-1zM130 550h1v1h-1zM351 512h1v1h-1zM731 491h1v1h-1zM153 514h1v1h-1zM392 499h1v1h-1zM144 500h1v1h-1zM116 522h1v1h-1zM151 548h1v1h-1zM117 491h1v1h-1zM565 510h1v1h-1zM548 483h1v1h-1zM798 451h1v1h-1zM410 527h1v1h-1zM576 514h1v1h-1zM585 538h1v1h-1zM105 505h1v1h-1zM295 519h1v1h-1zM139 501h1v1h-1zM591 522h1v1h-1zM687 480h1v1h-1zM69 524h1v1h-1zM387 512h1v1h-1zM671 509h1v1h-1zM285 503h1v1h-1zM294 505h1v1h-1zM169 530h1v1h-1zM166 531h1v1h-1zM232 530h1v1h-1zM800 479h1v1h-1zM486 476h1v1h-1zM453 492h1v1h-1zM341 497h1v1h-1zM389 541h1v1h-1zM108 499h1v1h-1zM73 528h1v1h-1zM549 502h1v1h-1zM370 546h1v1h-1zM193 544h1v1h-1zM398 530h1v1h-1zM85 545h1v1h-1zM85 531h1v1h-1zM527 505h1v1h-1zM735 498h1v1h-1zM496 497h1v1h-1zM179 510h1v1h-1zM553 493h1v1h-1zM277 533h1v1h-1zM441 492h1v1h-1zM180 510h1v1h-1zM313 533h1v1h-1zM429 513h1v1h-1zM77 531h1v1h-1zM629 533h1v1h-1zM382 482h1v1h-1zM445 486h1v1h-1zM803 512h1v1h-1zM56 542h1v1h-1zM259 523h1v1h-1zM381 549h1v1h-1zM786 475h1v1h-1zM524 501h1v1h-1zM517 495h1v1h-1zM610 483h1v1h-1zM213 524h1v1h-1zM423 479h1v1h-1zM380 541h1v1h-1zM270 497h1v1h-1zM113 493h1v1h-1zM55 519h1v1h-1zM287 520h1v1h-1zM98 509h1v1h-1zM645 519h1v1h-1zM433 522h1v1h-1zM159 488h1v1h-1zM390 516h1v1h-1zM137 523h1v1h-1zM785 492h1v1h-1zM480 504h1v1h-1zM598 496h1v1h-1zM292 511h1v1h-1zM402 478h1v1h-1zM750 474h1v1h-1zM141 506h1v1h-1zM350 508h1v1h-1zM131 544h1v1h-1zM303 527h1v1h-1zM632 518h1v1h-1zM426 484h1v1h-1zM248 532h1v1h-1zM617 487h1v1h-1zM419 464h1v1h-1zM425 512h1v1h-1zM395 506h1v1h-1zM785 507h1v1h-1zM538 475h1v1h-1zM387 487h1v1h-1zM479 542h1v1h-1zM70 539h1v1h-1zM132 552h1v1h-1zM553 524h1v1h-1zM350 495h1v1h-1zM83 518h1v1h-1zM138 488h1v1h-1zM184 529h1v1h-1zM397 516h1v1h-1zM393 499h1v1h-1zM279 541h1v1h-1zM374 546h1v1h-1zM346 535h1v1h-1zM177 492h1v1h-1zM289 509h1v1h-1zM212 497h1v1h-1zM230 510h1v1h-1zM547 511h1v1h-1zM105 508h1v1h-1zM749 526h1v1h-1zM500 522h1v1h-1zM312 515h1v1h-1zM56 489h1v1h-1zM471 517h1v1h-1zM514 509h1v1h-1zM237 513h1v1h-1zM379 496h1v1h-1zM402 499h1v1h-1zM117 515h1v1h-1zM509 462h1v1h-1zM258 495h1v1h-1zM318 487h1v1h-1zM534 498h1v1h-1zM70 491h1v1h-1zM319 539h1v1h-1zM102 505h1v1h-1zM352 543h1v1h-1zM499 473h1v1h-1zM122 555h1v1h-1zM202 537h1v1h-1zM109 517h1v1h-1zM256 536h1v1h-1zM552 533h1v1h-1zM377 531h1v1h-1zM559 502h1v1h-1zM655 493h1v1h-1zM66 489h1v1h-1zM322 508h1v1h-1zM323 510h1v1h-1zM108 538h1v1h-1zM336 487h1v1h-1zM235 487h1v1h-1zM66 499h1v1h-1zM498 464h1v1h-1zM316 527h1v1h-1zM411 518h1v1h-1zM280 542h1v1h-1zM327 489h1v1h-1zM133 551h1v1h-1zM702 494h1v1h-1zM415 534h1v1h-1zM109 518h1v1h-1zM70 532h1v1h-1zM808 467h1v1h-1zM97 494h1v1h-1zM560 489h1v1h-1zM565 506h1v1h-1zM381 508h1v1h-1zM78 533h1v1h-1zM439 493h1v1h-1zM535 474h1v1h-1zM315 548h1v1h-1zM479 499h1v1h-1zM130 528h1v1h-1zM303 517h1v1h-1zM796 533h1v1h-1zM57 536h1v1h-1zM276 534h1v1h-1zM269 526h1v1h-1zM583 478h1v1h-1zM161 516h1v1h-1zM292 484h1v1h-1zM444 491h1v1h-1zM121 491h1v1h-1zM124 533h1v1h-1zM286 490h1v1h-1zM645 534h1v1h-1zM706 527h1v1h-1zM156 555h1v1h-1zM175 505h1v1h-1zM450 523h1v1h-1zM372 515h1v1h-1zM440 497h1v1h-1zM448 476h1v1h-1zM406 530h1v1h-1zM604 488h1v1h-1zM229 545h1v1h-1zM339 502h1v1h-1zM119 508h1v1h-1zM405 504h1v1h-1zM334 491h1v1h-1zM560 525h1v1h-1zM450 520h1v1h-1zM109 528h1v1h-1zM61 490h1v1h-1zM744 474h1v1h-1zM124 497h1v1h-1zM153 544h1v1h-1zM498 502h1v1h-1zM484 528h1v1h-1zM334 483h1v1h-1zM375 532h1v1h-1zM165 506h1v1h-1zM315 548h1v1h-1zM215 491h1v1h-1zM291 488h1v1h-1zM393 538h1v1h-1zM119 502h1v1h-1zM173 547h1v1h-1zM285 500h1v1h-1zM240 533h1v1h-1zM340 501h1v1h-1zM182 520h1v1h-1zM219 515h1v1h-1zM788 496h1v1h-1zM705 533h1v1h-1zM199 533h1v1h-1zM660 523h1v1h-1zM178 490h1v1h-1zM61 493h1v1h-1zM520 497h1v1h-1zM126 474h1v1h-1zM426 544h1v1h-1zM386 484h1v1h-1zM308 534h1v1h-1zM229 514h1v1h-1zM156 528h1v1h-1zM378 544h1v1h-1zM90 520h1v1h-1zM374 525h1v1h-1zM594 533h1v1h-1zM132 486h1v1h-1zM532 521h1v1h-1zM413 543h1v1h-1zM95 554h1v1h-1zM812 471h1v1h-1zM193 526h1v1h-1zM121 501h1v1h-1zM285 517h1v1h-1zM212 486h1v1h-1zM330 531h1v1h-1zM56 493h1v1h-1zM263 492h1v1h-1zM220 529h1v1h-1zM233 484h1v1h-1zM282 531h1v1h-1zM189 474h1v1h-1zM194 536h1v1h-1zM328 507h1v1h-1zM351 548h1v1h-1zM398 491h1v1h-1zM547 488h1v1h-1zM584 458h1v1h-1zM63 520h1v1h-1zM852 491h1v1h-1zM416 503h1v1h-1zM65 532h1v1h-1zM520 477h1v1h-1zM281 539h1v1h-1zM246 546h1v1h-1zM535 520h1v1h-1zM92 498h1v1h-1zM355 486h1v1h-1zM531 472h1v1h-1zM426 523h1v1h-1zM663 508h1v1h-1zM182 507h1v1h-1zM347 538h1v1h-1zM122 495h1v1h-1zM409 532h1v1h-1zM229 538h1v1h-1zM179 509h1v1h-1zM557 474h1v1h-1zM311 521h1v1h-1zM638 500h1v1h-1zM270 483h1v1h-1zM490 506h1v1h-1zM55 511h1v1h-1zM450 536h1v1h-1zM327 506h1v1h-1zM512 512h1v1h-1zM531 495h1v1h-1zM440 525h1v1h-1zM208 541h1v1h-1zM330 501h1v1h-1zM540 525h1v1h-1zM261 492h1v1h-1zM257 507h1v1h-1zM585 537h1v1h-1zM690 480h1v1h-1zM221 545h1v1h-1zM371 519h1v1h-1zM318 525h1v1h-1zM181 536h1v1h-1zM431 516h1v1h-1zM672 538h1v1h-1zM295 496h1v1h-1zM234 498h1v1h-1zM518 529h1v1h-1zM223 485h1v1h-1zM313 465h1v1h-1zM192 491h1v1h-1zM395 484h1v1h-1zM576 499h1v1h-1zM161 529h1v1h-1zM469 483h1v1h-1zM742 471h1v1h-1zM639 524h1v1h-1zM315 527h1v1h-1zM318 547h1v1h-1zM576 492h1v1h-1zM496 508h1v1h-1zM877 491h1v1h-1zM433 540h1v1h-1zM418 510h1v1h-1zM153 546h1v1h-1zM791 469h1v1h-1zM160 512h1v1h-1zM443 534h1v1h-1zM288 514h1v1h-1zM605 517h1v1h-1zM105 489h1v1h-1zM484 468h1v1h-1zM576 500h1v1h-1zM347 483h1v1h-1zM364 518h1v1h-1zM433 475h1v1h-1zM588 527h1v1h-1zM427 504h1v1h-1zM611 541h1v1h-1zM445 527h1v1h-1zM510 494h1v1h-1zM300 499h1v1h-1zM110 499h1v1h-1zM469 504h1v1h-1zM241 522h1v1h-1zM432 483h1v1h-1zM68 532h1v1h-1zM334 542h1v1h-1zM148 543h1v1h-1zM189 518h1v1h-1zM477 497h1v1h-1zM417 542h1v1h-1zM267 504h1v1h-1zM408 480h1v1h-1zM302 531h1v1h-1zM289 480h1v1h-1zM542 488h1v1h-1zM106 556h1v1h-1zM258 543h1v1h-1zM147 519h1v1h-1zM717 521h1v1h-1zM198 520h1v1h-1zM92 508h1v1h-1zM62 497h1v1h-1zM395 528h1v1h-1zM705 505h1v1h-1zM325 496h1v1h-1zM613 478h1v1h-1zM273 530h1v1h-1zM211 529h1v1h-1zM124 470h1v1h-1zM195 535h1v1h-1zM801 477h1v1h-1zM390 507h1v1h-1zM350 496h1v1h-1zM312 512h1v1h-1zM235 519h1v1h-1zM218 526h1v1h-1zM810 498h1v1h-1zM531 517h1v1h-1zM486 491h1v1h-1zM499 544h1v1h-1zM331 536h1v1h-1zM714 528h1v1h-1zM733 506h1v1h-1zM598 479h1v1h-1zM587 474h1v1h-1zM369 504h1v1h-1zM321 547h1v1h-1zM333 505h1v1h-1zM59 543h1v1h-1zM338 525h1v1h-1zM549 502h1v1h-1zM159 493h1v1h-1zM193 510h1v1h-1zM593 493h1v1h-1zM232 509h1v1h-1zM129 486h1v1h-1zM114 499h1v1h-1zM59 507h1v1h-1zM113 518h1v1h-1zM292 528h1v1h-1zM120 513h1v1h-1zM254 496h1v1h-1zM129 518h1v1h-1zM339 547h1v1h-1zM333 518h1v1h-1zM492 506h1v1h-1zM182 518h1v1h-1zM209 520h1v1h-1zM117 516h1v1h-1zM57 496h1v1h-1zM182 514h1v1h-1zM261 500h1v1h-1zM72 555h1v1h-1zM71 528h1v1h-1zM323 516h1v1h-1zM769 481h1v1h-1zM233 512h1v1h-1zM398 483h1v1h-1zM147 505h1v1h-1zM102 493h1v1h-1zM121 543h1v1h-1zM532 538h1v1h-1zM508 510h1v1h-1zM712 482h1v1h-1zM113 494h1v1h-1zM166 504h1v1h-1zM76 547h1v1h-1zM125 522h1v1h-1zM223 517h1v1h-1zM63 488h1v1h-1zM96 542h1v1h-1zM736 490h1v1h-1zM103 519h1v1h-1zM618 526h1v1h-1zM169 511h1v1h-1zM185 495h1v1h-1zM284 510h1v1h-1zM174 522h1v1h-1zM286 488h1v1h-1zM181 552h1v1h-1zM524 531h1v1h-1zM480 492h1v1h-1zM259 529h1v1h-1zM599 502h1v1h-1zM74 542h1v1h-1zM166 551h1v1h-1zM277 481h1v1h-1zM363 515h1v1h-1zM59 549h1v1h-1zM298 509h1v1h-1zM58 495h1v1h-1zM111 528h1v1h-1zM371 524h1v1h-1zM324 484h1v1h-1zM233 534h1v1h-1zM100 512h1v1h-1zM127 554h1v1h-1zM560 491h1v1h-1zM149 531h1v1h-1zM542 501h1v1h-1zM167 487h1v1h-1zM151 554h1v1h-1zM113 508h1v1h-1zM447 527h1v1h-1zM333 505h1v1h-1zM95 506h1v1h-1zM281 515h1v1h-1zM631 476h1v1h-1zM146 490h1v1h-1zM233 519h1v1h-1zM207 551h1v1h-1zM684 470h1v1h-1zM519 513h1v1h-1zM475 546h1v1h-1zM386 506h1v1h-1zM255 537h1v1h-1zM778 472h1v1h-1zM569 493h1v1h-1zM482 532h1v1h-1zM608 490h1v1h-1zM245 523h1v1h-1zM137 542h1v1h-1zM616 484h1v1h-1zM320 484h1v1h-1zM528 521h1v1h-1zM719 499h1v1h-1zM304 536h1v1h-1zM67 497h1v1h-1zM284 489h1v1h-1zM519 518h1v1h-1zM463 512h1v1h-1zM538 508h1v1h-1zM198 550h1v1h-1zM619 505h1v1h-1zM655 510h1v1h-1zM721 531h1v1h-1zM579 523h1v1h-1zM99 522h1v1h-1zM721 503h1v1h-1zM198 528h1v1h-1zM694 504h1v1h-1zM558 487h1v1h-1zM55 531h1v1h-1zM713 464h1v1h-1zM93 543h1v1h-1zM407 527h1v1h-1zM817 460h1v1h-1zM359 485h1v1h-1zM524 506h1v1h-1zM261 503h1v1h-1zM195 514h1v1h-1zM556 523h1v1h-1zM650 505h1v1h-1zM242 502h1v1h-1zM675 515h1v1h-1zM597 493h1v1h-1zM67 546h1v1h-1zM447 491h1v1h-1zM175 498h1v1h-1zM176 545h1v1h-1zM55 532h1v1h-1zM195 511h1v1h-1zM386 508h1v1h-1zM419 536h1v1h-1zM605 505h1v1h-1zM303 517h1v1h-1zM588 484h1v1h-1zM350 484h1v1h-1zM598 528h1v1h-1zM348 504h1v1h-1zM425 525h1v1h-1zM533 529h1v1h-1zM564 484h1v1h-1zM158 505h1v1h-1zM745 518h1v1h-1zM492 502h1v1h-1zM390 535h1v1h-1zM136 489h1v1h-1zM263 500h1v1h-1zM273 520h1v1h-1zM310 500h1v1h-1zM253 483h1v1h-1zM153 485h1v1h-1zM62 495h1v1h-1zM285 533h1v1h-1zM250 484h1v1h-1zM60 525h1v1h-1zM365 543h1v1h-1zM625 500h1v1h-1zM173 517h1v1h-1zM285 495h1v1h-1zM480 544h1v1h-1zM139 490h1v1h-1zM512 477h1v1h-1zM188 525h1v1h-1zM342 486h1v1h-1zM64 516h1v1h-1zM729 503h1v1h-1zM228 522h1v1h-1zM194 548h1v1h-1zM419 543h1v1h-1zM332 532h1v1h-1zM471 504h1v1h-1zM351 521h1v1h-1zM185 509h1v1h-1zM755 519h1v1h-1zM635 514h1v1h-1zM539 539h1v1h-1zM814 504h1v1h-1zM472 515h1v1h-1zM140 539h1v1h-1zM103 551h1v1h-1zM346 523h1v1h-1zM96 516h1v1h-1zM373 512h1v1h-1zM541 479h1v1h-1zM160 495h1v1h-1zM271 500h1v1h-1zM507 525h1v1h-1zM85 498h1v1h-1zM336 521h1v1h-1zM604 494h1v1h-1zM594 509h1v1h-1zM412 501h1v1h-1zM358 537h1v1h-1zM669 529h1v1h-1zM130 504h1v1h-1zM619 539h1v1h-1zM76 506h1v1h-1zM200 506h1v1h-1zM166 519h1v1h-1zM81 506h1v1h-1zM519 488h1v1h-1zM112 497h1v1h-1zM683 516h1v1h-1zM627 531h1v1h-1zM538 478h1v1h-1zM763 511h1v1h-1zM238 499h1v1h-1zM197 508h1v1h-1zM78 550h1v1h-1zM610 492h1v1h-1zM298 514h1v1h-1zM120 490h1v1h-1zM811 469h1v1h-1zM212 546h1v1h-1zM369 547h1v1h-1zM421 506h1v1h-1zM448 496h1v1h-1zM429 501h1v1h-1zM327 485h1v1h-1zM232 509h1v1h-1zM535 528h1v1h-1zM210 533h1v1h-1zM688 483h1v1h-1zM611 493h1v1h-1zM136 510h1v1h-1zM448 546h1v1h-1zM297 536h1v1h-1zM532 474h1v1h-1zM165 524h1v1h-1zM159 518h1v1h-1zM592 502h1v1h-1zM89 527h1v1h-1zM693 523h1v1h-1zM729 532h1v1h-1zM66 543h1v1h-1zM403 499h1v1h-1zM57 515h1v1h-1zM207 526h1v1h-1zM482 511h1v1h-1zM398 544h1v1h-1zM153 529h1v1h-1zM128 493h1v1h-1zM427 477h1v1h-1zM657 516h1v1h-1zM544 499h1v1h-1zM540 488h1v1h-1zM466 492h1v1h-1zM774 529h1v1h-1zM779 483h1v1h-1zM92 553h1v1h-1zM241 503h1v1h-1zM76 550h1v1h-1zM598 533h1v1h-1zM149 498h1v1h-1zM856 528h1v1h-1zM265 542h1v1h-1zM365 480h1v1h-1zM744 491h1v1h-1zM374 545h1v1h-1zM132 530h1v1h-1zM243 550h1v1h-1zM499 479h1v1h-1zM265 505h1v1h-1zM118 498h1v1h-1zM513 479h1v1h-1zM754 535h1v1h-1zM111 498h1v1h-1zM358 525h1v1h-1zM54 546h1v1h-1zM181 543h1v1h-1zM74 479h1v1h-1zM80 556h1v1h-1zM185 546h1v1h-1zM159 509h1v1h-1zM105 526h1v1h-1zM580 489h1v1h-1zM331 550h1v1h-1zM281 489h1v1h-1zM504 480h1v1h-1zM287 512h1v1h-1zM479 479h1v1h-1zM76 500h1v1h-1zM59 521h1v1h-1zM331 514h1v1h-1zM320 497h1v1h-1zM535 504h1v1h-1zM443 476h1v1h-1zM523 489h1v1h-1zM326 514h1v1h-1zM396 507h1v1h-1zM151 475h1v1h-1zM672 519h1v1h-1zM280 504h1v1h-1zM507 491h1v1h-1zM824 472h1v1h-1zM82 535h1v1h-1zM376 519h1v1h-1zM456 487h1v1h-1zM573 509h1v1h-1zM746 503h1v1h-1zM767 474h1v1h-1zM434 500h1v1h-1zM630 487h1v1h-1zM502 484h1v1h-1zM386 512h1v1h-1zM503 481h1v1h-1zM106 507h1v1h-1zM362 501h1v1h-1zM372 534h1v1h-1zM257 522h1v1h-1zM656 522h1v1h-1zM73 528h1v1h-1zM137 499h1v1h-1zM369 520h1v1h-1zM96 549h1v1h-1zM527 515h1v1h-1zM63 490h1v1h-1zM114 536h1v1h-1zM479 526h1v1h-1zM241 501h1v1h-1zM55 492h1v1h-1zM95 503h1v1h-1zM482 484h1v1h-1zM489 513h1v1h-1zM708 497h1v1h-1zM669 481h1v1h-1zM261 522h1v1h-1zM635 469h1v1h-1zM537 479h1v1h-1zM541 493h1v1h-1zM167 503h1v1h-1zM214 513h1v1h-1zM475 480h1v1h-1zM583 515h1v1h-1zM527 489h1v1h-1zM621 509h1v1h-1zM280 520h1v1h-1zM506 482h1v1h-1zM185 493h1v1h-1zM497 478h1v1h-1zM745 480h1v1h-1zM457 530h1v1h-1zM311 509h1v1h-1zM342 536h1v1h-1zM183 526h1v1h-1zM168 489h1v1h-1zM394 530h1v1h-1zM96 510h1v1h-1zM116 547h1v1h-1zM464 480h1v1h-1zM263 508h1v1h-1zM685 517h1v1h-1zM426 545h1v1h-1zM678 485h1v1h-1zM234 531h1v1h-1zM519 528h1v1h-1zM797 505h1v1h-1zM195 498h1v1h-1zM129 547h1v1h-1zM341 504h1v1h-1zM229 497h1v1h-1zM99 546h1v1h-1zM256 530h1v1h-1zM136 555h1v1h-1zM164 514h1v1h-1zM135 488h1v1h-1zM223 540h1v1h-1zM643 493h1v1h-1zM418 545h1v1h-1zM507 489h1v1h-1zM439 514h1v1h-1zM242 529h1v1h-1zM123 547h1v1h-1zM507 534h1v1h-1zM335 512h1v1h-1zM101 521h1v1h-1zM54 523h1v1h-1zM82 502h1v1h-1zM447 491h1v1h-1zM246 489h1v1h-1zM589 539h1v1h-1zM529 473h1v1h-1zM622 481h1v1h-1zM446 542h1v1h-1zM408 511h1v1h-1zM94 506h1v1h-1zM461 512h1v1h-1zM491 540h1v1h-1zM59 506h1v1h-1zM411 526h1v1h-1zM271 489h1v1h-1zM286 496h1v1h-1zM122 539h1v1h-1zM455 476h1v1h-1zM254 528h1v1h-1zM85 532h1v1h-1zM162 499h1v1h-1zM377 542h1v1h-1zM658 487h1v1h-1zM372 536h1v1h-1zM147 504h1v1h-1zM556 520h1v1h-1zM352 496h1v1h-1zM65 546h1v1h-1zM110 536h1v1h-1zM600 527h1v1h-1zM139 526h1v1h-1zM76 519h1v1h-1zM278 494h1v1h-1zM56 512h1v1h-1zM132 551h1v1h-1zM159 548h1v1h-1zM217 550h1v1h-1zM419 476h1v1h-1zM267 552h1v1h-1zM189 545h1v1h-1zM523 494h1v1h-1zM225 536h1v1h-1zM422 497h1v1h-1zM346 546h1v1h-1zM156 521h1v1h-1zM287 498h1v1h-1zM363 548h1v1h-1zM347 513h1v1h-1zM522 476h1v1h-1zM163 504h1v1h-1zM269 540h1v1h-1zM558 534h1v1h-1zM624 539h1v1h-1zM499 526h1v1h-1zM657 480h1v1h-1zM363 540h1v1h-1zM132 494h1v1h-1zM238 543h1v1h-1zM598 491h1v1h-1zM238 470h1v1h-1zM100 490h1v1h-1zM135 495h1v1h-1zM67 526h1v1h-1zM718 462h1v1h-1zM309 485h1v1h-1zM110 514h1v1h-1zM213 524h1v1h-1zM356 515h1v1h-1zM582 505h1v1h-1zM101 524h1v1h-1zM533 483h1v1h-1zM64 521h1v1h-1zM142 555h1v1h-1zM133 509h1v1h-1zM467 488h1v1h-1zM59 529h1v1h-1zM144 517h1v1h-1zM495 499h1v1h-1zM189 494h1v1h-1zM327 509h1v1h-1zM316 541h1v1h-1zM201 520h1v1h-1zM543 530h1v1h-1zM393 502h1v1h-1zM434 532h1v1h-1zM100 535h1v1h-1zM74 525h1v1h-1zM324 514h1v1h-1zM154 535h1v1h-1zM468 538h1v1h-1zM586 484h1v1h-1zM431 502h1v1h-1zM760 518h1v1h-1zM84 547h1v1h-1zM522 536h1v1h-1zM199 491h1v1h-1zM582 529h1v1h-1zM493 520h1v1h-1zM381 520h1v1h-1zM397 501h1v1h-1zM69 543h1v1h-1zM201 527h1v1h-1zM712 499h1v1h-1zM568 482h1v1h-1zM102 503h1v1h-1zM368 521h1v1h-1zM134 532h1v1h-1zM243 529h1v1h-1zM295 515h1v1h-1z"/></svg>
<div class="a" style="left:52px;top:132px;width:2px;height:447px;background:#000"></div>

<div class="a" style="left:887px;top:132px;width:1px;height:447px;background:#000"></div>
<div class="t" style="left:54px;top:122px">ms</div>
<div class="yl" style="top:528px">5.0</div>
<div class="yl" style="top:484px">10</div>
<div class="yl" style="top:439px">15</div>
<div class="yl" style="top:395px">20</div>
<div class="yl" style="top:351px">25</div>
<div class="yl" style="top:307px">30</div>
<div class="yl" style="top:262px">35</div>
<div class="yl" style="top:218px">40</div>
<div class="yl" style="top:174px">45</div>
<div class="yl" style="top:129px">50</div>
<div class="xl" style="left:14px;width:80px;text-align:center">0</div>
<div class="xl" style="left:97px;width:80px;text-align:center">29</div>
<div class="xl" style="left:181px;width:80px;text-align:center">59</div>
<div class="xl" style="left:264px;width:80px;text-align:center">89</div>
<div class="xl" style="left:347px;width:80px;text-align:center">119</div>
<div class="xl" style="left:430px;width:80px;text-align:center">149</div>
<div class="xl" style="left:514px;width:80px;text-align:center">179</div>
<div class="xl" style="left:597px;width:80px;text-align:center">209</div>
<div class="xl" style="left:680px;width:80px;text-align:center">239</div>
<div class="xl" style="left:763px;width:80px;text-align:center">269</div>
<div class="xl" style="left:870px">299gB</div>

<!-- bottom -->
<div class="a" style="left:4px;top:95px;width:1px;height:646px;background:#fff"></div>
<div class="a" style="left:1027px;top:95px;width:1px;height:646px;background:#fdfdfd"></div>
<div class="a" style="left:4px;top:740px;width:1024px;height:1px;background:#f8f4f0"></div>
<div class="a" style="left:4px;top:741px;width:1024px;height:2px;background:#2e5074"></div>
<div class="a" style="left:98px;top:741px;width:747px;height:2px;background:#2a4cae"></div>
<div class="a" style="left:4px;top:743px;width:94px;height:3px;background:linear-gradient(#eef8ee,#a8d8a8 1px,#7cc07c)"></div>
<div class="a" style="left:98px;top:743px;width:747px;height:3px;background:linear-gradient(#a0d0f4,#80bde8)"></div>
<div class="a" style="left:845px;top:743px;width:183px;height:3px;background:#f0f6fc"></div>
<!-- right panel -->
<div class="a btn" style="left:921px;top:131px;width:73px;height:21px"></div>
<div class="t" style="left:921px;top:137px;width:73px;text-align:center">Start</div>
<div class="a" style="left:912px;top:162px;width:101px;height:1px;background:#a6a6a6"></div>
<div class="a" style="left:912px;top:163px;width:101px;height:1px;background:#fff"></div>
<div class="a radio" style="left:917px;top:168px"></div>
<div class="a" style="left:921px;top:172px;width:5px;height:5px;border-radius:50%;background:radial-gradient(#60f060,#20a020)"></div>
<div class="t" style="left:933px;top:170px">Read</div>
<div class="a radio" style="left:917px;top:184px"></div>
<div class="t" style="left:933px;top:186px">Write</div>
<div class="a" style="left:912px;top:201px;width:101px;height:1px;background:#a6a6a6"></div>
<div class="a" style="left:912px;top:202px;width:101px;height:1px;background:#fff"></div>
<div class="a cb" style="left:917px;top:209px"></div>
<div class="t" style="left:933px;top:211px">Short stroke</div>
<div class="a" style="left:917px;top:229px;width:62px;height:20px;border:1px solid #b5b5b5;background:#fff"></div>
<div class="t" style="left:920px;top:234px;color:#a8a8a8">40</div>
<div class="a" style="left:962px;top:231px;width:16px;height:16px;background:linear-gradient(#eaf0fc,#c9daf6);border-radius:1px"></div>
<svg class="a" style="left:962px;top:231px" width="16" height="16"><path d="M5 6l3-3 3 3M5 10l3 3 3-3" fill="none" stroke="#a8b8d8" stroke-width="1.5"/></svg>
<div class="t" style="left:990px;top:234px">gB</div>
<!-- table -->
<div class="t" style="left:58px;top:605px">transfer size</div>
<div class="t" style="left:122px;top:605px;width:100px;text-align:right">operations / sec</div>
<div class="t" style="left:232px;top:605px;width:100px;text-align:right">avg. access time</div>
<div class="t" style="left:348px;top:605px;width:100px;text-align:right">agv. speed</div>
<div class="a" style="left:39px;top:617px;width:412px;height:2px;background:#858585"></div>
<div class="a" style="left:129px;top:603px;width:2px;height:104px;background:#858585"></div>
<div class="a" style="left:238px;top:603px;width:2px;height:104px;background:#858585"></div>
<div class="a" style="left:348px;top:603px;width:2px;height:104px;background:#858585"></div>
<div class="a" style="left:24px;top:626px;width:8px;height:8px;border:1px solid #000;background:#ffff00"></div>
<div class="a cb" style="left:39px;top:623px"></div>
<svg class="a" style="left:39px;top:623px" width="13" height="13"><path d="M3 6l2.5 2.5 4.5-4.5" fill="none" stroke="#21a121" stroke-width="2"/></svg>
<div class="t" style="left:56px;top:624px">512 bytes</div>
<div class="tb12" style="left:122px;top:623px">135 IOPS</div>
<div class="tb12" style="left:232px;top:623px">7.4 ms</div>
<div class="tb12" style="left:349px;top:623px;letter-spacing:0.45px">0.066 MB/s</div>
<div class="a" style="left:24px;top:642px;width:8px;height:8px;border:1px solid #000;background:#ff0000"></div>
<div class="a cb" style="left:39px;top:639px"></div>
<svg class="a" style="left:39px;top:639px" width="13" height="13"><path d="M3 6l2.5 2.5 4.5-4.5" fill="none" stroke="#21a121" stroke-width="2"/></svg>
<div class="t" style="left:56px;top:640px">4 KB</div>
<div class="tb12" style="left:122px;top:639px">134 IOPS</div>
<div class="tb12" style="left:232px;top:639px">7.4 ms</div>
<div class="tb12" style="left:349px;top:639px;letter-spacing:0.45px">0.524 MB/s</div>
<div class="a" style="left:24px;top:659px;width:8px;height:8px;border:1px solid #000;background:#00ff00"></div>
<div class="a cb" style="left:39px;top:656px"></div>
<svg class="a" style="left:39px;top:656px" width="13" height="13"><path d="M3 6l2.5 2.5 4.5-4.5" fill="none" stroke="#21a121" stroke-width="2"/></svg>
<div class="t" style="left:56px;top:657px">64 KB</div>
<div class="tb12" style="left:122px;top:656px">110 IOPS</div>
<div class="tb12" style="left:232px;top:656px">9.0 ms</div>
<div class="tb12" style="left:349px;top:656px;letter-spacing:0.45px">6.933 MB/s</div>
<div class="a" style="left:24px;top:676px;width:8px;height:8px;border:1px solid #000;background:#0070ff"></div>
<div class="a cb" style="left:39px;top:673px"></div>
<svg class="a" style="left:39px;top:673px" width="13" height="13"><path d="M3 6l2.5 2.5 4.5-4.5" fill="none" stroke="#21a121" stroke-width="2"/></svg>
<div class="t" style="left:56px;top:674px">1 MB</div>
<div class="tb12" style="left:122px;top:673px">55 IOPS</div>
<div class="tb12" style="left:232px;top:673px">17 ms</div>
<div class="tb12" style="left:349px;top:673px;letter-spacing:0.45px">55.792 MB/s</div>
<div class="a" style="left:24px;top:694px;width:8px;height:8px;border:1px solid #000;background:#00ffff"></div>
<div class="a cb" style="left:39px;top:691px"></div>
<svg class="a" style="left:39px;top:691px" width="13" height="13"><path d="M3 6l2.5 2.5 4.5-4.5" fill="none" stroke="#21a121" stroke-width="2"/></svg>
<div class="t" style="left:56px;top:692px">Random</div>
<div class="tb12" style="left:122px;top:691px">73 IOPS</div>
<div class="tb12" style="left:232px;top:691px">13 ms</div>
<div class="tb12" style="left:349px;top:691px;letter-spacing:0.45px">37.164 MB/s</div>
</body></html>
